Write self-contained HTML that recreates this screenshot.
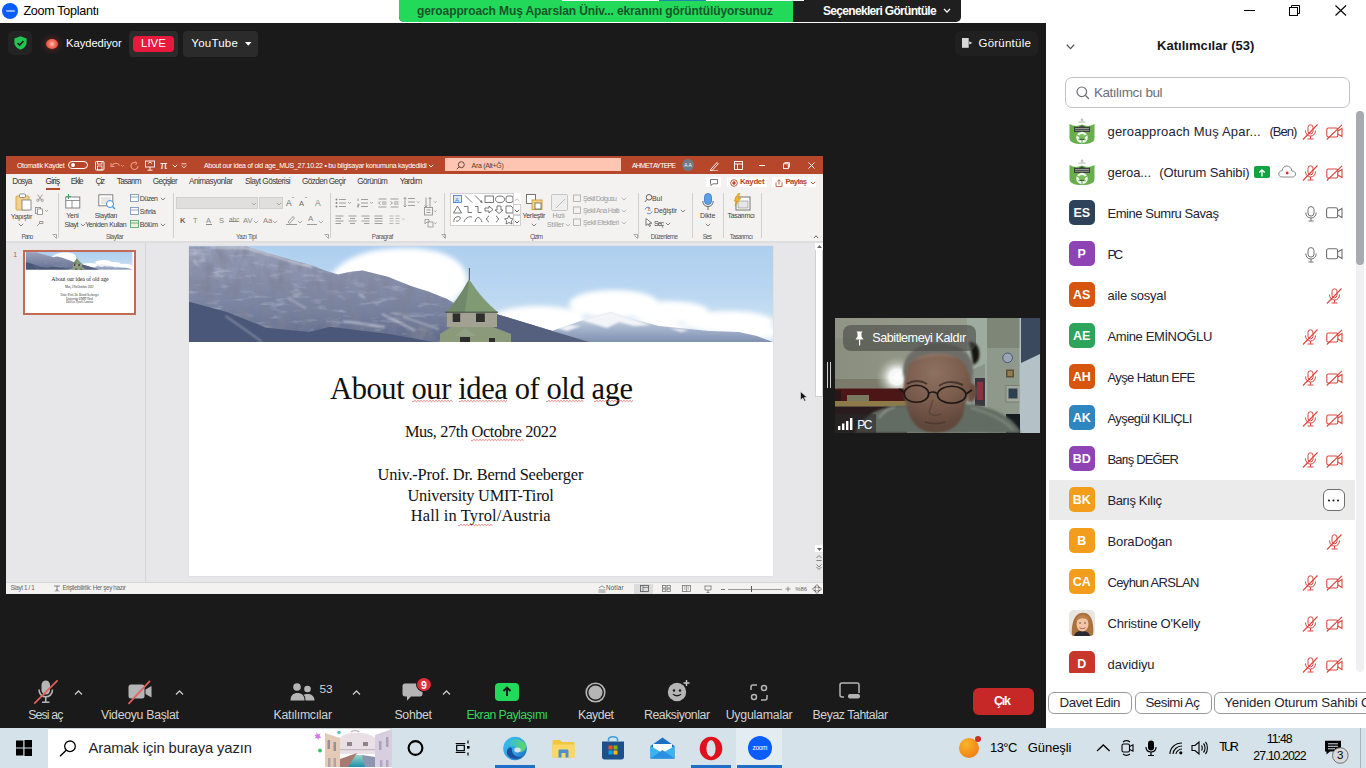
<!DOCTYPE html>
<html><head><meta charset="utf-8">
<style>
*{box-sizing:border-box}
html,body{margin:0;padding:0}
body{width:1366px;height:768px;overflow:hidden;position:relative;font-family:"Liberation Sans",sans-serif;background:#1a1a1a}
.a{position:absolute}
.t{position:absolute;white-space:nowrap;line-height:1}
svg.a{overflow:visible}
</style></head><body>
<div class="a" style="left:0px;top:0px;width:1366px;height:23px;background:#fff;"></div>
<div class="a" style="left:2px;top:3px;width:16px;height:16px;background:#0b5cff;border-radius:50%;"></div>
<div class="a" style="left:5.5px;top:10.3px;width:9px;height:1.4px;background:rgba(255,255,255,.55);border-radius:1px;"></div>
<div class="t" style="left:23.40px;top:5.29px;font-size:12.6px;color:#000;letter-spacing:-0.303px;">Zoom Toplantı</div>
<div class="a" style="left:1244px;top:10px;width:11px;height:1px;background:#000;"></div>
<svg class="a" style="left:1289px;top:5px;" width="12" height="11"><rect x="0.5" y="2.5" width="8" height="8" fill="none" stroke="#000"/><path d="M2.5 2.5V0.5H10.5V8.5H8.5" fill="none" stroke="#000"/></svg>
<svg class="a" style="left:1335px;top:5px;" width="12" height="11"><path d="M0.5 0.5L11 10.5M11 0.5L0.5 10.5" stroke="#000" stroke-width="1.1"/></svg>
<div class="a" style="left:399px;top:0px;width:562px;height:22px;background:#1f1f1f;border-radius:0 0 5px 5px;"></div>
<div class="a" style="left:399px;top:0px;width:394px;height:22px;background:#23d959;border-radius:0 0 0 5px;"></div>
<div class="a" style="left:562px;top:0px;width:241.5px;height:1px;background:#f4f8f6;"></div>
<div class="a" style="left:659.4px;top:0px;width:46.6px;height:1px;background:#1a8aa8;"></div>
<div class="t" style="left:417.00px;top:5.30px;font-size:12px;color:#16562a;font-weight:bold;letter-spacing:-0.102px;">geroapproach Muş Aparslan Üniv... ekranını görüntülüyorsunuz</div>
<div class="t" style="left:823.00px;top:5.30px;font-size:12px;color:#fff;font-weight:bold;letter-spacing:-0.689px;">Seçenekleri Görüntüle</div>
<svg class="a" style="left:943px;top:8px;" width="8" height="6"><path d="M1 1L4 4L7 1" fill="none" stroke="#fff" stroke-width="1.3"/></svg>
<div class="a" style="left:0px;top:23px;width:1046px;height:705px;background:#1a1a1a;"></div>
<div class="a" style="left:8px;top:31px;width:24px;height:24px;background:#232323;border-radius:5px;"></div>
<svg class="a" style="left:14px;top:36px;" width="13" height="14" viewBox="0 0 13 14"><path d="M6.5 0.3L12.6 2.4V6.6C12.6 9.9 10.2 12.4 6.5 13.8C2.8 12.4 0.4 9.9 0.4 6.6V2.4Z" fill="#23c552"/><path d="M3.5 7L5.6 9.1L9.5 5" fill="none" stroke="#1a1a1a" stroke-width="1.6"/></svg>
<div class="a" style="left:40px;top:33px;width:24px;height:22px;background:radial-gradient(closest-side,rgba(190,60,40,.55),rgba(120,40,30,.25) 60%,rgba(26,26,26,0));border-radius:50%;"></div>
<div class="a" style="left:46px;top:39px;width:12px;height:10px;background:radial-gradient(circle at 50% 50%,#ffc8b8 0%,#f4705c 40%,#e34a3a 80%);border-radius:50%;"></div>
<div class="t" style="left:66.10px;top:37.98px;font-size:11.2px;color:#fff;letter-spacing:-0.040px;">Kaydediyor</div>
<div class="a" style="left:129px;top:31px;width:49px;height:26px;background:#2b2b2b;border-radius:4px;"></div>
<div class="a" style="left:133px;top:36px;width:41px;height:15.5px;background:#e8193c;border-radius:4px;"></div>
<div class="t" style="left:141.00px;top:38.02px;font-size:11.5px;color:#fff;letter-spacing:-0.018px;">LIVE</div>
<div class="a" style="left:183px;top:31px;width:75px;height:26px;background:#2b2b2b;border-radius:4px;"></div>
<div class="t" style="left:191.30px;top:38.02px;font-size:11.5px;color:#fff;letter-spacing:0.234px;">YouTube</div>
<svg class="a" style="left:245px;top:42px;" width="7" height="4"><path d="M0 0H6.5L3.25 3.8Z" fill="#fff"/></svg>
<div class="a" style="left:955px;top:31px;width:83px;height:25px;background:#202020;border-radius:6px;"></div>
<svg class="a" style="left:961.6px;top:38px;" width="12" height="10"><rect x="0" y="0" width="6.7" height="9.8" fill="#d8d8d8"/><path d="M7.2 3.3L10.3 4.9L7.2 6.5Z" fill="#d8d8d8"/></svg>
<div class="t" style="left:978.50px;top:37.73px;font-size:11.5px;color:#fff;letter-spacing:0.227px;">Görüntüle</div>
<svg class="a" style="left:33px;top:680px;" width="26" height="25">
      <rect x="8.5" y="0.5" width="8.5" height="14" rx="4.25" fill="#b5b5b5"/>
      <path d="M6 9.5C6 14 9 16.8 12.75 16.8C16.5 16.8 19.5 14 19.5 9.5" fill="none" stroke="#b5b5b5" stroke-width="1.6"/>
      <path d="M12.75 17V21.5M9 22.2H16.5" stroke="#b5b5b5" stroke-width="1.6"/>
      <path d="M1.2 23.6L24.6 0.3" stroke="#e0605a" stroke-width="1.7"/></svg>
<svg class="a" style="left:74px;top:690px;" width="9" height="5"><path d="M1 4.5L4.5 1L8 4.5" fill="none" stroke="#c8c8c8" stroke-width="1.3"/></svg>
<div class="t" style="left:28.20px;top:708.54px;font-size:12.3px;color:#d2d2d2;letter-spacing:-0.841px;">Sesi aç</div>
<svg class="a" style="left:127px;top:680px;" width="26" height="25">
      <rect x="1.5" y="4.5" width="16" height="14" rx="2.5" fill="#b5b5b5"/>
      <path d="M18.5 9.5L24.5 6V17.5L18.5 14Z" fill="#b5b5b5"/>
      <path d="M1.5 23.8L23 0.8" stroke="#e0605a" stroke-width="1.7"/></svg>
<svg class="a" style="left:175px;top:690px;" width="9" height="5"><path d="M1 4.5L4.5 1L8 4.5" fill="none" stroke="#c8c8c8" stroke-width="1.3"/></svg>
<div class="t" style="left:101.00px;top:708.54px;font-size:12.3px;color:#d2d2d2;letter-spacing:-0.297px;">Videoyu Başlat</div>
<svg class="a" style="left:290px;top:683px;" width="26" height="19">
      <circle cx="7" cy="4" r="3.8" fill="#b5b5b5"/>
      <circle cx="17.5" cy="6" r="3.3" fill="#b5b5b5"/>
      <path d="M0.5 17.5C0.5 12 3.5 10 7.5 10C11.5 10 14.5 12 14.5 17.5Z" fill="#b5b5b5"/>
      <path d="M15.5 17.5C15.5 14 14.5 12.5 13.5 11.8C14.5 11.2 16 11 17.5 11C21 11 24.5 12.8 24.5 17.5Z" fill="#b5b5b5"/></svg>
<div class="t" style="left:319.50px;top:684.27px;font-size:11.8px;color:#d2d2d2;letter-spacing:-0.098px;">53</div>
<svg class="a" style="left:352px;top:690px;" width="9" height="5"><path d="M1 4.5L4.5 1L8 4.5" fill="none" stroke="#c8c8c8" stroke-width="1.3"/></svg>
<div class="t" style="left:273.50px;top:708.54px;font-size:12.3px;color:#d2d2d2;letter-spacing:-0.273px;">Katılımcılar</div>
<svg class="a" style="left:402px;top:683px;" width="22" height="19">
      <path d="M3 0.5H18C19.5 0.5 20.5 1.5 20.5 3V11C20.5 12.5 19.5 13.5 18 13.5H9L5 17.8V13.5H3C1.5 13.5 0.5 12.5 0.5 11V3C0.5 1.5 1.5 0.5 3 0.5Z" fill="#b5b5b5"/></svg>
<div class="a" style="left:416px;top:677px;width:16px;height:15px;background:#e02d3c;border-radius:50%;border:1.2px solid #1a1a1a;"></div>
<div class="t" style="left:421.00px;top:679.88px;font-size:10.5px;color:#fff;font-weight:bold;">9</div>
<svg class="a" style="left:442px;top:690px;" width="9" height="5"><path d="M1 4.5L4.5 1L8 4.5" fill="none" stroke="#c8c8c8" stroke-width="1.3"/></svg>
<div class="t" style="left:394.40px;top:708.54px;font-size:12.3px;color:#d2d2d2;letter-spacing:-0.278px;">Sohbet</div>
<div class="a" style="left:495px;top:682.7px;width:24px;height:18.5px;background:#23d959;border-radius:4px;"></div>
<svg class="a" style="left:502px;top:686px;" width="10" height="11"><path d="M5 10V1.5M1.5 5L5 1.5L8.5 5" fill="none" stroke="#111" stroke-width="1.8"/></svg>
<div class="t" style="left:466.40px;top:708.54px;font-size:12.3px;color:#35d55f;letter-spacing:-0.567px;">Ekran Paylaşımı</div>
<svg class="a" style="left:585px;top:682px;" width="21" height="21"><circle cx="10.5" cy="10.5" r="9.3" fill="none" stroke="#b5b5b5" stroke-width="1.6"/><circle cx="10.5" cy="10.5" r="7" fill="#b5b5b5"/></svg>
<div class="t" style="left:578.00px;top:708.54px;font-size:12.3px;color:#d2d2d2;letter-spacing:-0.463px;">Kaydet</div>
<svg class="a" style="left:667px;top:679px;" width="24" height="23">
      <circle cx="10" cy="13" r="9.2" fill="#b5b5b5"/>
      <circle cx="7" cy="11.5" r="1.2" fill="#1a1a1a"/><circle cx="13" cy="11.5" r="1.2" fill="#1a1a1a"/>
      <path d="M6 15C7.5 17.3 12.5 17.3 14 15" fill="none" stroke="#1a1a1a" stroke-width="1.3"/>
      <path d="M19.5 1V7M16.5 4H22.5" stroke="#c8c8c8" stroke-width="1.4"/></svg>
<div class="t" style="left:644.00px;top:708.54px;font-size:12.3px;color:#d2d2d2;letter-spacing:-0.463px;">Reaksiyonlar</div>
<svg class="a" style="left:750px;top:684px;" width="18" height="18">
      <path d="M1 6V3C1 2 2 1 3 1H7M17 11V14C17 15 16 16 15 16H11" fill="none" stroke="#b5b5b5" stroke-width="1.5"/>
      <circle cx="14" cy="4" r="2.5" fill="none" stroke="#b5b5b5" stroke-width="1.5"/>
      <circle cx="4" cy="13" r="2.5" fill="none" stroke="#b5b5b5" stroke-width="1.5"/></svg>
<div class="t" style="left:725.70px;top:708.54px;font-size:12.3px;color:#d2d2d2;letter-spacing:-0.206px;">Uygulamalar</div>
<svg class="a" style="left:839px;top:682px;" width="22" height="18">
      <path d="M5 15H3C2 15 1 14 1 13V3C1 2 2 1 3 1H18C19 1 20 2 20 3V11" fill="none" stroke="#b5b5b5" stroke-width="1.5"/>
      <rect x="9" y="12" width="12" height="4.5" rx="2" fill="#b5b5b5"/></svg>
<div class="t" style="left:812.60px;top:708.54px;font-size:12.3px;color:#d2d2d2;letter-spacing:-0.440px;">Beyaz Tahtalar</div>
<div class="a" style="left:973px;top:688px;width:61px;height:27px;background:#c62828;border-radius:6px;"></div>
<div class="t" style="left:993.90px;top:694.88px;font-size:12.5px;color:#fff;font-weight:bold;letter-spacing:-1.150px;">Çık</div>
<div class="a" style="left:1046px;top:23px;width:320px;height:705px;background:#fff;"></div>
<svg class="a" style="left:1066px;top:43.5px;" width="9" height="6"><path d="M0.8 0.8L4.5 4.6L8.2 0.8" fill="none" stroke="#555" stroke-width="1.3"/></svg>
<div class="t" style="left:1157.00px;top:38.95px;font-size:13px;color:#131619;font-weight:bold;letter-spacing:0.038px;">Katılımcılar (53)</div>
<div class="a" style="left:1065px;top:77.3px;width:285px;height:31.2px;background:#fff;border-radius:7px;border:1px solid #c2c2c8;"></div>
<svg class="a" style="left:1076px;top:86px;" width="14" height="14"><circle cx="5.8" cy="5.8" r="4.8" fill="none" stroke="#6e6e78" stroke-width="1.2"/><path d="M9.3 9.3L13 13" stroke="#6e6e78" stroke-width="1.3"/></svg>
<div class="t" style="left:1094.00px;top:86.03px;font-size:13.5px;color:#6e6e78;letter-spacing:-0.487px;">Katılımcı bul</div>
<svg class="a" style="left:1069px;top:118px;" width="26" height="26">
      <path d="M0.5 6C5 8.5 9 8.5 13 6.5C17 8.5 21 8.5 25.5 6V20C25.5 24 21 26 13 26C5 26 0.5 24 0.5 20Z" fill="#68ae4c"/>
      <path d="M5 8.5C8 9.5 10.5 9 13 7.5C15.5 9 18 9.5 21 8.5V14H5Z" fill="#3d3f3d"/>
      <path d="M6 10.5H20M6 12.3H20" stroke="#cfd8cc" stroke-width=".6"/>
      <circle cx="13" cy="19.5" r="5.8" fill="#eef5ea"/>
      <circle cx="13" cy="19" r="3" fill="#7cc060"/>
      <path d="M13 19V25M9.5 22L13 20L16.5 22M8 17L10.5 18.5M18 17L15.5 18.5" stroke="#6cb050" stroke-width="1.1"/>
      <path d="M9 5C9 2 17 2 17 5Z" fill="#d6d6d6"/><circle cx="13" cy="1.8" r="1.3" fill="#c0c0c0"/></svg>
<div class="t" style="left:1107.50px;top:124.85px;font-size:13px;color:#232333;letter-spacing:0.189px;">geroapproach Muş Apar...</div>
<svg class="a" style="left:1302px;top:123.5px;" width="16" height="16"><rect x="6" y="0.8" width="5" height="9" rx="2.5" fill="none" stroke="#d9463e" stroke-width="1"/>
      <path d="M3.5 6.5C3.5 10 5.5 12 8.5 12C11.5 12 13.5 10 13.5 6.5" fill="none" stroke="#d9463e" stroke-width="1"/>
      <path d="M8.5 12V14.8M5.5 15H11.5" stroke="#d9463e" stroke-width="1"/>
      <path d="M1 15.5L15.5 0.5" stroke="#d9463e" stroke-width="1.1"/></svg>
<svg class="a" style="left:1326px;top:123.5px;" width="17" height="16"><rect x="0.8" y="4" width="11" height="9" rx="1.5" fill="none" stroke="#d9463e" stroke-width="1.1"/>
      <path d="M11.8 7L16 4.5V12.5L11.8 10" fill="none" stroke="#d9463e" stroke-width="1.1"/>
      <path d="M0.8 15.5L16 0.8" stroke="#d9463e" stroke-width="1.1"/></svg>
<div class="t" style="left:1269.50px;top:124.85px;font-size:13px;color:#232333;letter-spacing:-0.971px;">(Ben)</div>
<svg class="a" style="left:1069px;top:159px;" width="26" height="26">
      <path d="M0.5 6C5 8.5 9 8.5 13 6.5C17 8.5 21 8.5 25.5 6V20C25.5 24 21 26 13 26C5 26 0.5 24 0.5 20Z" fill="#68ae4c"/>
      <path d="M5 8.5C8 9.5 10.5 9 13 7.5C15.5 9 18 9.5 21 8.5V14H5Z" fill="#3d3f3d"/>
      <path d="M6 10.5H20M6 12.3H20" stroke="#cfd8cc" stroke-width=".6"/>
      <circle cx="13" cy="19.5" r="5.8" fill="#eef5ea"/>
      <circle cx="13" cy="19" r="3" fill="#7cc060"/>
      <path d="M13 19V25M9.5 22L13 20L16.5 22M8 17L10.5 18.5M18 17L15.5 18.5" stroke="#6cb050" stroke-width="1.1"/>
      <path d="M9 5C9 2 17 2 17 5Z" fill="#d6d6d6"/><circle cx="13" cy="1.8" r="1.3" fill="#c0c0c0"/></svg>
<div class="t" style="left:1107.50px;top:165.85px;font-size:13px;color:#232333;letter-spacing:-0.081px;">geroa...</div>
<div class="a" style="left:1254px;top:165.9px;width:16px;height:11.8px;background:#12a440;border-radius:2px;"></div>
<svg class="a" style="left:1257px;top:167.5px;" width="10" height="9"><path d="M5 8.5V2M2.3 4.5L5 1.8L7.7 4.5" fill="none" stroke="#fff" stroke-width="1.3"/></svg>
<svg class="a" style="left:1277.5px;top:165px;" width="18" height="13"><path d="M4 12H14.5C16.5 12 17.5 10.5 17.5 9C17.5 7 16 6 14 6C13.5 3 11.5 1 9 1C6 1 4.5 3 4.3 5.5C2 5.7 0.8 7.5 0.8 9C0.8 10.8 2 12 4 12Z" fill="none" stroke="#8a8a8a" stroke-width="1"/><circle cx="9.2" cy="8" r="1.4" fill="#e03030"/></svg>
<svg class="a" style="left:1302px;top:164.5px;" width="16" height="16"><rect x="6" y="0.8" width="5" height="9" rx="2.5" fill="none" stroke="#d9463e" stroke-width="1"/>
      <path d="M3.5 6.5C3.5 10 5.5 12 8.5 12C11.5 12 13.5 10 13.5 6.5" fill="none" stroke="#d9463e" stroke-width="1"/>
      <path d="M8.5 12V14.8M5.5 15H11.5" stroke="#d9463e" stroke-width="1"/>
      <path d="M1 15.5L15.5 0.5" stroke="#d9463e" stroke-width="1.1"/></svg>
<svg class="a" style="left:1326px;top:164.5px;" width="17" height="16"><rect x="0.8" y="4" width="11" height="9" rx="1.5" fill="none" stroke="#d9463e" stroke-width="1.1"/>
      <path d="M11.8 7L16 4.5V12.5L11.8 10" fill="none" stroke="#d9463e" stroke-width="1.1"/>
      <path d="M0.8 15.5L16 0.8" stroke="#d9463e" stroke-width="1.1"/></svg>
<div class="t" style="left:1159.30px;top:165.85px;font-size:13px;color:#232333;letter-spacing:-0.106px;">(Oturum Sahibi)</div>
<div class="a" style="left:1069px;top:199.70000000000002px;width:25.5px;height:25.5px;background:#2e425a;border-radius:5px;"></div>
<div class="t" style="left:1073.41px;top:206.68px;font-size:12.5px;color:#fff;font-weight:bold;">ES</div>
<div class="t" style="left:1107.50px;top:206.85px;font-size:13px;color:#232333;letter-spacing:-0.443px;">Emine Sumru Savaş</div>
<svg class="a" style="left:1304.5px;top:205.70000000000002px;" width="12" height="16"><rect x="3" y="0.6" width="6" height="9.5" rx="3" fill="none" stroke="#707070" stroke-width="1"/>
      <path d="M0.8 6.5C0.8 10 3 12 6 12C9 12 11.2 10 11.2 6.5" fill="none" stroke="#707070" stroke-width="1"/>
      <path d="M6 12V14.8M3.5 15H8.5" stroke="#707070" stroke-width="1"/></svg>
<svg class="a" style="left:1326px;top:207.4px;" width="17" height="12"><rect x="0.6" y="0.8" width="11" height="10" rx="1.8" fill="none" stroke="#707070" stroke-width="1.1"/>
      <path d="M11.6 4L16 1.5V10.5L11.6 8" fill="none" stroke="#707070" stroke-width="1.1"/></svg>
<div class="a" style="left:1069px;top:240.7px;width:25.5px;height:25.5px;background:#8e44b5;border-radius:5px;"></div>
<div class="t" style="left:1077.59px;top:247.68px;font-size:12.5px;color:#fff;font-weight:bold;">P</div>
<div class="t" style="left:1107.50px;top:247.85px;font-size:13px;color:#232333;letter-spacing:-2.470px;">PC</div>
<svg class="a" style="left:1304.5px;top:246.7px;" width="12" height="16"><rect x="3" y="0.6" width="6" height="9.5" rx="3" fill="none" stroke="#707070" stroke-width="1"/>
      <path d="M0.8 6.5C0.8 10 3 12 6 12C9 12 11.2 10 11.2 6.5" fill="none" stroke="#707070" stroke-width="1"/>
      <path d="M6 12V14.8M3.5 15H8.5" stroke="#707070" stroke-width="1"/></svg>
<svg class="a" style="left:1326px;top:248.39999999999998px;" width="17" height="12"><rect x="0.6" y="0.8" width="11" height="10" rx="1.8" fill="none" stroke="#707070" stroke-width="1.1"/>
      <path d="M11.6 4L16 1.5V10.5L11.6 8" fill="none" stroke="#707070" stroke-width="1.1"/></svg>
<div class="a" style="left:1069px;top:281.7px;width:25.5px;height:25.5px;background:#d6550f;border-radius:5px;"></div>
<div class="t" style="left:1073.06px;top:288.68px;font-size:12.5px;color:#fff;font-weight:bold;">AS</div>
<div class="t" style="left:1107.50px;top:288.85px;font-size:13px;color:#232333;letter-spacing:-0.191px;">aile sosyal</div>
<svg class="a" style="left:1326px;top:287.5px;" width="16" height="16"><rect x="6" y="0.8" width="5" height="9" rx="2.5" fill="none" stroke="#d9463e" stroke-width="1"/>
      <path d="M3.5 6.5C3.5 10 5.5 12 8.5 12C11.5 12 13.5 10 13.5 6.5" fill="none" stroke="#d9463e" stroke-width="1"/>
      <path d="M8.5 12V14.8M5.5 15H11.5" stroke="#d9463e" stroke-width="1"/>
      <path d="M1 15.5L15.5 0.5" stroke="#d9463e" stroke-width="1.1"/></svg>
<div class="a" style="left:1069px;top:322.7px;width:25.5px;height:25.5px;background:#2da45c;border-radius:5px;"></div>
<div class="t" style="left:1073.06px;top:329.68px;font-size:12.5px;color:#fff;font-weight:bold;">AE</div>
<div class="t" style="left:1107.50px;top:329.85px;font-size:13px;color:#232333;letter-spacing:-0.383px;">Amine EMİNOĞLU</div>
<svg class="a" style="left:1302px;top:328.5px;" width="16" height="16"><rect x="6" y="0.8" width="5" height="9" rx="2.5" fill="none" stroke="#d9463e" stroke-width="1"/>
      <path d="M3.5 6.5C3.5 10 5.5 12 8.5 12C11.5 12 13.5 10 13.5 6.5" fill="none" stroke="#d9463e" stroke-width="1"/>
      <path d="M8.5 12V14.8M5.5 15H11.5" stroke="#d9463e" stroke-width="1"/>
      <path d="M1 15.5L15.5 0.5" stroke="#d9463e" stroke-width="1.1"/></svg>
<svg class="a" style="left:1326px;top:328.5px;" width="17" height="16"><rect x="0.8" y="4" width="11" height="9" rx="1.5" fill="none" stroke="#d9463e" stroke-width="1.1"/>
      <path d="M11.8 7L16 4.5V12.5L11.8 10" fill="none" stroke="#d9463e" stroke-width="1.1"/>
      <path d="M0.8 15.5L16 0.8" stroke="#d9463e" stroke-width="1.1"/></svg>
<div class="a" style="left:1069px;top:363.7px;width:25.5px;height:25.5px;background:#d6550f;border-radius:5px;"></div>
<div class="t" style="left:1072.72px;top:370.68px;font-size:12.5px;color:#fff;font-weight:bold;">AH</div>
<div class="t" style="left:1107.50px;top:370.85px;font-size:13px;color:#232333;letter-spacing:-0.621px;">Ayşe Hatun EFE</div>
<svg class="a" style="left:1302px;top:369.5px;" width="16" height="16"><rect x="6" y="0.8" width="5" height="9" rx="2.5" fill="none" stroke="#d9463e" stroke-width="1"/>
      <path d="M3.5 6.5C3.5 10 5.5 12 8.5 12C11.5 12 13.5 10 13.5 6.5" fill="none" stroke="#d9463e" stroke-width="1"/>
      <path d="M8.5 12V14.8M5.5 15H11.5" stroke="#d9463e" stroke-width="1"/>
      <path d="M1 15.5L15.5 0.5" stroke="#d9463e" stroke-width="1.1"/></svg>
<svg class="a" style="left:1326px;top:369.5px;" width="17" height="16"><rect x="0.8" y="4" width="11" height="9" rx="1.5" fill="none" stroke="#d9463e" stroke-width="1.1"/>
      <path d="M11.8 7L16 4.5V12.5L11.8 10" fill="none" stroke="#d9463e" stroke-width="1.1"/>
      <path d="M0.8 15.5L16 0.8" stroke="#d9463e" stroke-width="1.1"/></svg>
<div class="a" style="left:1069px;top:404.7px;width:25.5px;height:25.5px;background:#2e86c1;border-radius:5px;"></div>
<div class="t" style="left:1072.72px;top:411.68px;font-size:12.5px;color:#fff;font-weight:bold;">AK</div>
<div class="t" style="left:1107.50px;top:411.85px;font-size:13px;color:#232333;letter-spacing:-0.587px;">Ayşegül KILIÇLI</div>
<svg class="a" style="left:1302px;top:410.5px;" width="16" height="16"><rect x="6" y="0.8" width="5" height="9" rx="2.5" fill="none" stroke="#d9463e" stroke-width="1"/>
      <path d="M3.5 6.5C3.5 10 5.5 12 8.5 12C11.5 12 13.5 10 13.5 6.5" fill="none" stroke="#d9463e" stroke-width="1"/>
      <path d="M8.5 12V14.8M5.5 15H11.5" stroke="#d9463e" stroke-width="1"/>
      <path d="M1 15.5L15.5 0.5" stroke="#d9463e" stroke-width="1.1"/></svg>
<svg class="a" style="left:1326px;top:410.5px;" width="17" height="16"><rect x="0.8" y="4" width="11" height="9" rx="1.5" fill="none" stroke="#d9463e" stroke-width="1.1"/>
      <path d="M11.8 7L16 4.5V12.5L11.8 10" fill="none" stroke="#d9463e" stroke-width="1.1"/>
      <path d="M0.8 15.5L16 0.8" stroke="#d9463e" stroke-width="1.1"/></svg>
<div class="a" style="left:1069px;top:445.7px;width:25.5px;height:25.5px;background:#8e44b5;border-radius:5px;"></div>
<div class="t" style="left:1072.72px;top:452.68px;font-size:12.5px;color:#fff;font-weight:bold;">BD</div>
<div class="t" style="left:1107.50px;top:452.85px;font-size:13px;color:#232333;letter-spacing:-0.881px;">Barış DEĞER</div>
<svg class="a" style="left:1302px;top:451.5px;" width="16" height="16"><rect x="6" y="0.8" width="5" height="9" rx="2.5" fill="none" stroke="#d9463e" stroke-width="1"/>
      <path d="M3.5 6.5C3.5 10 5.5 12 8.5 12C11.5 12 13.5 10 13.5 6.5" fill="none" stroke="#d9463e" stroke-width="1"/>
      <path d="M8.5 12V14.8M5.5 15H11.5" stroke="#d9463e" stroke-width="1"/>
      <path d="M1 15.5L15.5 0.5" stroke="#d9463e" stroke-width="1.1"/></svg>
<svg class="a" style="left:1326px;top:451.5px;" width="17" height="16"><rect x="0.8" y="4" width="11" height="9" rx="1.5" fill="none" stroke="#d9463e" stroke-width="1.1"/>
      <path d="M11.8 7L16 4.5V12.5L11.8 10" fill="none" stroke="#d9463e" stroke-width="1.1"/>
      <path d="M0.8 15.5L16 0.8" stroke="#d9463e" stroke-width="1.1"/></svg>
<div class="a" style="left:1049px;top:479.7px;width:306px;height:40.6px;background:#ebebeb;"></div>
<div class="a" style="left:1069px;top:486.7px;width:25.5px;height:25.5px;background:#f29d1c;border-radius:5px;"></div>
<div class="t" style="left:1072.72px;top:493.68px;font-size:12.5px;color:#fff;font-weight:bold;">BK</div>
<div class="t" style="left:1107.50px;top:493.85px;font-size:13px;color:#232333;letter-spacing:-0.462px;">Barış Kılıç</div>
<div class="a" style="left:1322.5px;top:489.4px;width:22px;height:22px;background:#fff;border-radius:6px;border:1px solid #6e6e6e;"></div>
<svg class="a" style="left:1327px;top:499px;" width="13" height="3"><circle cx="2" cy="1.5" r="1.1" fill="#222"/><circle cx="6.5" cy="1.5" r="1.1" fill="#222"/><circle cx="11" cy="1.5" r="1.1" fill="#222"/></svg>
<div class="a" style="left:1069px;top:527.6999999999999px;width:25.5px;height:25.5px;background:#f29d1c;border-radius:5px;"></div>
<div class="t" style="left:1077.25px;top:534.67px;font-size:12.5px;color:#fff;font-weight:bold;">B</div>
<div class="t" style="left:1107.50px;top:534.85px;font-size:13px;color:#232333;letter-spacing:-0.123px;">BoraDoğan</div>
<svg class="a" style="left:1326px;top:533.5px;" width="16" height="16"><rect x="6" y="0.8" width="5" height="9" rx="2.5" fill="none" stroke="#d9463e" stroke-width="1"/>
      <path d="M3.5 6.5C3.5 10 5.5 12 8.5 12C11.5 12 13.5 10 13.5 6.5" fill="none" stroke="#d9463e" stroke-width="1"/>
      <path d="M8.5 12V14.8M5.5 15H11.5" stroke="#d9463e" stroke-width="1"/>
      <path d="M1 15.5L15.5 0.5" stroke="#d9463e" stroke-width="1.1"/></svg>
<div class="a" style="left:1069px;top:568.6999999999999px;width:25.5px;height:25.5px;background:#f29d1c;border-radius:5px;"></div>
<div class="t" style="left:1072.72px;top:575.67px;font-size:12.5px;color:#fff;font-weight:bold;">CA</div>
<div class="t" style="left:1107.50px;top:575.85px;font-size:13px;color:#232333;letter-spacing:-0.659px;">Ceyhun ARSLAN</div>
<svg class="a" style="left:1302px;top:574.5px;" width="16" height="16"><rect x="6" y="0.8" width="5" height="9" rx="2.5" fill="none" stroke="#d9463e" stroke-width="1"/>
      <path d="M3.5 6.5C3.5 10 5.5 12 8.5 12C11.5 12 13.5 10 13.5 6.5" fill="none" stroke="#d9463e" stroke-width="1"/>
      <path d="M8.5 12V14.8M5.5 15H11.5" stroke="#d9463e" stroke-width="1"/>
      <path d="M1 15.5L15.5 0.5" stroke="#d9463e" stroke-width="1.1"/></svg>
<svg class="a" style="left:1326px;top:574.5px;" width="17" height="16"><rect x="0.8" y="4" width="11" height="9" rx="1.5" fill="none" stroke="#d9463e" stroke-width="1.1"/>
      <path d="M11.8 7L16 4.5V12.5L11.8 10" fill="none" stroke="#d9463e" stroke-width="1.1"/>
      <path d="M0.8 15.5L16 0.8" stroke="#d9463e" stroke-width="1.1"/></svg>
<svg class="a" style="left:1069px;top:609.6999999999999px;" width="26" height="26">
              <defs><clipPath id="cph"><rect width="26" height="26" rx="5"/></clipPath></defs>
              <g clip-path="url(#cph)">
              <rect width="26" height="26" fill="#e9e6e2"/>
              <path d="M3 26C2 18 4 8 8 5C11 2 17 2 20 5C24 9 25 18 24 26Z" fill="#a8733e"/>
              <path d="M5 26C6 22 9 21 13 21C17 21 20 22 21 26Z" fill="#2a2a35"/>
              <ellipse cx="13.5" cy="14" rx="6" ry="7.5" fill="#f0c4a4"/>
              <path d="M7 11C8 6 11 5 14 5C17 5 20 7 20.5 11C18 9 15 8 12 8.5C10 9 8 10 7 11Z" fill="#b98048"/>
              <path d="M10.5 17.5C12 19 15 19 16.5 17.5" fill="none" stroke="#c05050" stroke-width=".9"/>
              <circle cx="11" cy="13" r=".7" fill="#3a2a20"/><circle cx="16" cy="13" r=".7" fill="#3a2a20"/>
              </g></svg>
<div class="t" style="left:1107.50px;top:616.85px;font-size:13px;color:#232333;letter-spacing:-0.180px;">Christine O&#x27;Kelly</div>
<svg class="a" style="left:1302px;top:615.5px;" width="16" height="16"><rect x="6" y="0.8" width="5" height="9" rx="2.5" fill="none" stroke="#d9463e" stroke-width="1"/>
      <path d="M3.5 6.5C3.5 10 5.5 12 8.5 12C11.5 12 13.5 10 13.5 6.5" fill="none" stroke="#d9463e" stroke-width="1"/>
      <path d="M8.5 12V14.8M5.5 15H11.5" stroke="#d9463e" stroke-width="1"/>
      <path d="M1 15.5L15.5 0.5" stroke="#d9463e" stroke-width="1.1"/></svg>
<svg class="a" style="left:1326px;top:615.5px;" width="17" height="16"><rect x="0.8" y="4" width="11" height="9" rx="1.5" fill="none" stroke="#d9463e" stroke-width="1.1"/>
      <path d="M11.8 7L16 4.5V12.5L11.8 10" fill="none" stroke="#d9463e" stroke-width="1.1"/>
      <path d="M0.8 15.5L16 0.8" stroke="#d9463e" stroke-width="1.1"/></svg>
<div class="a" style="left:1069px;top:650.6999999999999px;width:25.5px;height:25.5px;background:#c8372b;border-radius:5px;"></div>
<div class="t" style="left:1077.25px;top:657.67px;font-size:12.5px;color:#fff;font-weight:bold;">D</div>
<div class="t" style="left:1107.50px;top:657.85px;font-size:13px;color:#232333;letter-spacing:-0.087px;">davidiyu</div>
<svg class="a" style="left:1302px;top:656.5px;" width="16" height="16"><rect x="6" y="0.8" width="5" height="9" rx="2.5" fill="none" stroke="#d9463e" stroke-width="1"/>
      <path d="M3.5 6.5C3.5 10 5.5 12 8.5 12C11.5 12 13.5 10 13.5 6.5" fill="none" stroke="#d9463e" stroke-width="1"/>
      <path d="M8.5 12V14.8M5.5 15H11.5" stroke="#d9463e" stroke-width="1"/>
      <path d="M1 15.5L15.5 0.5" stroke="#d9463e" stroke-width="1.1"/></svg>
<svg class="a" style="left:1326px;top:656.5px;" width="17" height="16"><rect x="0.8" y="4" width="11" height="9" rx="1.5" fill="none" stroke="#d9463e" stroke-width="1.1"/>
      <path d="M11.8 7L16 4.5V12.5L11.8 10" fill="none" stroke="#d9463e" stroke-width="1.1"/>
      <path d="M0.8 15.5L16 0.8" stroke="#d9463e" stroke-width="1.1"/></svg>
<div class="a" style="left:1356px;top:111.4px;width:8px;height:561px;background:#efeff4;border-radius:4px;"></div>
<div class="a" style="left:1356px;top:111.4px;width:8px;height:153.4px;background:#a9a9b1;border-radius:4px;"></div>
<div class="a" style="left:1046px;top:673.3px;width:320px;height:54.7px;background:#fff;"></div>
<div class="a" style="left:1048.4px;top:691.5px;width:84px;height:22.2px;background:#fff;border-radius:6px;border:1px solid #9a9a9a;"></div>
<div class="t" style="left:1059.60px;top:696.20px;font-size:13.3px;color:#232333;letter-spacing:-0.471px;">Davet Edin</div>
<div class="a" style="left:1134.5px;top:691.5px;width:77px;height:22.2px;background:#fff;border-radius:6px;border:1px solid #9a9a9a;"></div>
<div class="t" style="left:1145.50px;top:696.20px;font-size:13.3px;color:#232333;letter-spacing:-0.498px;">Sesimi Aç</div>
<div class="a" style="left:1213.5px;top:691.5px;width:170px;height:22.2px;background:#fff;border-radius:6px;border:1px solid #9a9a9a;"></div>
<div class="t" style="left:1224.20px;top:696.20px;font-size:13.3px;color:#232333;letter-spacing:-0.143px;">Yeniden Oturum Sahibi Ol</div>
<div class="a" style="left:0px;top:728px;width:1366px;height:40px;background:#d5e2e9;"></div>
<svg class="a" style="left:16px;top:740px;" width="16" height="16"><rect x="0" y="0.5" width="7.3" height="7" fill="#000"/><rect x="8.5" y="0" width="7.5" height="7.5" fill="#000"/><rect x="0" y="8.5" width="7.3" height="7" fill="#000"/><rect x="8.5" y="8.5" width="7.5" height="7.5" fill="#000"/></svg>
<div class="a" style="left:48px;top:728px;width:344px;height:40px;background:#fff;border-top:1px solid #c9d1d6;"></div>
<svg class="a" style="left:59px;top:740px;" width="18" height="17"><circle cx="11" cy="6.3" r="5.3" fill="none" stroke="#000" stroke-width="1.3"/><path d="M7.2 10.2L1 16.3" stroke="#000" stroke-width="1.4"/></svg>
<div class="t" style="left:88.60px;top:741.42px;font-size:14.8px;color:#1f1f1f;letter-spacing:-0.119px;">Aramak için buraya yazın</div>
<svg class="a" style="left:313px;top:729px;" width="79" height="38">
      <defs><linearGradient id="can" x1="0" y1="0" x2="0" y2="1"><stop offset="0" stop-color="#9ad7c8"/><stop offset="1" stop-color="#1f8fa8"/></linearGradient></defs>
      <path d="M12 4L27 9V38H12Z" fill="#e3cbb8"/>
      <rect x="14.5" y="11" width="2.5" height="9" fill="#9c8f8f"/><rect x="20.5" y="13" width="2.5" height="9" fill="#9c8f8f"/>
      <rect x="15" y="29" width="2.5" height="9" fill="#b5a3a3"/><rect x="20.5" y="29" width="2.5" height="9" fill="#b5a3a3"/>
      <path d="M27 9C32 2 55 2 62 9V25H27Z" fill="#e8e0e4"/>
      <path d="M38 3C40 1 44 1 46 3" fill="none" stroke="#c8b8c8" stroke-width="1.5"/>
      <rect x="34" y="13" width="5" height="4" fill="#8f8588"/><rect x="50" y="13" width="5" height="4" fill="#8f8588"/>
      <rect x="27" y="20" width="35" height="1.2" fill="#c5b8c2"/>
      <path d="M27 38L37 26H49L60 38Z" fill="url(#can)"/>
      <path d="M27 38V30L44 24L35 38Z" fill="#a67a70"/>
      <path d="M49 26L62 28V38L52 38Z" fill="#8c96b0"/>
      <path d="M62 6L79 0V38H62Z" fill="#d7cfe0"/>
      <rect x="66" y="12" width="2.5" height="9" fill="#aaa2b8"/><rect x="73" y="8" width="2.5" height="10" fill="#aaa2b8"/>
      <rect x="67" y="31" width="2.5" height="7" fill="#b0a8c0"/><rect x="73" y="31" width="2.5" height="7" fill="#b0a8c0"/>
      <path d="M3.5 3L5 5.5L7.5 4.5L6.5 7L8.5 8.5L6 9L5.5 11L4 9L1.5 9.5L3 7.5L1 5.5L3.5 6Z" fill="#d678ea"/>
      <circle cx="26" cy="3.5" r="1.8" fill="#56c3c8"/>
      <circle cx="7" cy="21.5" r="1.9" fill="#3fbd6a"/></svg>
<svg class="a" style="left:407px;top:740px;" width="18" height="16"><circle cx="8.5" cy="8" r="6.9" fill="none" stroke="#000" stroke-width="2.1"/></svg>
<svg class="a" style="left:455px;top:740px;" width="18" height="16"><path d="M0.7 3.5H10.3M0.7 12.5H10.3" stroke="#000" stroke-width="1.2"/><rect x="1.7" y="5.3" width="7.6" height="5.4" fill="none" stroke="#000" stroke-width="1.2"/><path d="M13 0.5V3.5M13 12.5V15.5" stroke="#000" stroke-width="1.2"/><rect x="12" y="6" width="2.6" height="2.6" fill="#000"/></svg>
<svg class="a" style="left:502px;top:736px;" width="26" height="25">
      <defs><linearGradient id="eg1" x1="0" y1="0" x2="1" y2="1"><stop offset="0" stop-color="#36c5f0"/><stop offset=".6" stop-color="#2f9de0"/><stop offset="1" stop-color="#1e5fb3"/></linearGradient>
      <linearGradient id="eg2" x1="0" y1="0" x2="1" y2="0"><stop offset="0" stop-color="#37b6e8"/><stop offset="1" stop-color="#5ad86a"/></linearGradient></defs>
      <circle cx="13" cy="12.5" r="11.8" fill="url(#eg1)"/>
      <path d="M5 8C8 2 20 1 24 9C24.5 13 22 16 18 16C15 16 13.5 14.5 14 12.5C15 10 11 9.5 9 10.5Z" fill="url(#eg2)"/>
      <path d="M10 14C10 19 15 22 20 20.5C17 23.5 9 24 5.5 19C4 16.5 5 13 7.5 11.5C9 11 10 12 10 14Z" fill="#1b4fa0"/>
      <ellipse cx="15.5" cy="14" rx="3.3" ry="2.4" fill="#d5e2e9"/></svg>
<div class="a" style="left:495px;top:765px;width:40px;height:3px;background:#1f6fc8;"></div>
<svg class="a" style="left:552px;top:739px;" width="24" height="19">
      <path d="M0.5 2.5C0.5 1.5 1 1 2 1H8L10 3H21C22 3 22.5 3.5 22.5 4.5V17C22.5 18 22 18.5 21 18.5H2C1 18.5 0.5 18 0.5 17Z" fill="#f3c640"/>
      <path d="M0.5 5.5H22.5V17C22.5 18 22 18.5 21 18.5H2C1 18.5 0.5 18 0.5 17Z" fill="#fad868"/>
      <path d="M6.5 18.5V12C6.5 11 7 10.5 8 10.5H15C16 10.5 16.5 11 16.5 12V18.5H13.5V14H9.5V18.5Z" fill="#4a8fd0"/></svg>
<svg class="a" style="left:601px;top:736px;" width="24" height="24">
      <path d="M7.5 5V3.5C7.5 1.5 9.5 0.8 12 0.8C14.5 0.8 16.5 1.5 16.5 3.5V5" fill="none" stroke="#3aa0e0" stroke-width="1.6"/>
      <path d="M1 5.5H23V21C23 22.5 22 23.5 20.5 23.5H3.5C2 23.5 1 22.5 1 21Z" fill="#1d4f8c"/>
      <rect x="7.5" y="9.5" width="4" height="4" fill="#f25022"/><rect x="12.5" y="9.5" width="4" height="4" fill="#7fba00"/>
      <rect x="7.5" y="14.5" width="4" height="4" fill="#00a4ef"/><rect x="12.5" y="14.5" width="4" height="4" fill="#ffb900"/></svg>
<svg class="a" style="left:650px;top:737px;" width="25" height="22">
      <path d="M0.5 9L12.5 0.5L24.5 9V21.5H0.5Z" fill="#1d6fc4"/>
      <path d="M3 7H22V15L12.5 19L3 15Z" fill="#fff"/>
      <path d="M0.5 9L12.5 16L24.5 9V21.5H0.5Z" fill="#3ab3f0"/>
      <path d="M0.5 21.5L12.5 13L24.5 21.5Z" fill="#2a8fe0"/></svg>
<svg class="a" style="left:699px;top:736px;" width="24" height="25">
      <ellipse cx="12" cy="12.5" rx="11.3" ry="11.8" fill="#e0101d"/>
      <ellipse cx="12" cy="12.5" rx="4.6" ry="8.3" fill="#d5e2e9"/></svg>
<div class="a" style="left:691px;top:765px;width:40px;height:3px;background:#1f6fc8;"></div>
<div class="a" style="left:736px;top:728px;width:46px;height:40px;background:rgba(255,255,255,.35);"></div>
<div class="a" style="left:748px;top:736px;width:24px;height:24px;background:#0b5cff;border-radius:50%;"></div>
<div class="t" style="left:752.50px;top:745.27px;font-size:6.5px;color:#fff;letter-spacing:-0.298px;">zoom</div>
<div class="a" style="left:737px;top:765px;width:45px;height:3px;background:#1f6fc8;"></div>
<div class="a" style="left:958.7px;top:737.7px;width:20.5px;height:20.5px;background:radial-gradient(circle at 35% 30%,#f7b72a,#f27c12 80%);border-radius:50%;"></div>
<div class="a" style="left:975px;top:735.7px;width:6.3px;height:6.3px;background:#d12a2a;border-radius:50%;"></div>
<div class="t" style="left:990.00px;top:741.35px;font-size:13px;color:#000;letter-spacing:-0.552px;">13°C</div>
<div class="t" style="left:1027.80px;top:741.35px;font-size:13px;color:#000;letter-spacing:-0.078px;">Güneşli</div>
<svg class="a" style="left:1096px;top:744px;" width="15" height="8"><path d="M1 7L7.3 1L13.6 7" fill="none" stroke="#000" stroke-width="1.3"/></svg>
<svg class="a" style="left:1121px;top:740px;" width="13" height="16"><rect x="1" y="4" width="7.5" height="8" rx="1.5" fill="none" stroke="#000" stroke-width="1.1"/><path d="M8.5 6.5L12 4.8V11.2L8.5 9.5" fill="none" stroke="#000" stroke-width="1.1"/><path d="M2 2C4 0.5 7 0.5 9 2M2 14C4 15.5 7 15.5 9 14" fill="none" stroke="#000" stroke-width="1.1"/></svg>
<svg class="a" style="left:1145px;top:740px;" width="12" height="16"><rect x="3" y="0.5" width="6" height="10" rx="3" fill="#000"/><path d="M1 7C1 10.5 3 12 6 12C9 12 11 10.5 11 7" fill="none" stroke="#000" stroke-width="1.2"/><path d="M6 12V15.5M3 15.5H9" stroke="#000" stroke-width="1.2"/></svg>
<svg class="a" style="left:1169px;top:742px;" width="15" height="13"><path d="M1 12C1 6 6 1 13 1M4 12C4 8 8 4 13 4M7 12C7 9.5 10 7 13 7" fill="none" stroke="#000" stroke-width="1.1"/><circle cx="11.8" cy="10.8" r="1.6" fill="#000"/></svg>
<svg class="a" style="left:1191px;top:741px;" width="17" height="14"><path d="M1 4.5H4L8 1V13L4 9.5H1Z" fill="none" stroke="#000" stroke-width="1.1"/><path d="M10.5 4.5C11.5 5.5 11.5 8.5 10.5 9.5M12.5 2.5C14.5 4.5 14.5 9.5 12.5 11.5M14.5 1C17 3.5 17 10.5 14.5 13" fill="none" stroke="#000" stroke-width="1.1"/></svg>
<div class="t" style="left:1219.30px;top:741.34px;font-size:12.3px;color:#000;letter-spacing:-2.838px;">TUR</div>
<div class="t" style="left:1266.80px;top:732.75px;font-size:12.3px;color:#000;letter-spacing:-0.997px;">11:48</div>
<div class="t" style="left:1253.30px;top:750.25px;font-size:12.3px;color:#000;letter-spacing:-0.918px;">27.10.2022</div>
<svg class="a" style="left:1324px;top:740px;" width="26" height="25"><path d="M1 0.8H17V11.5H6L2.5 14.5V11.5H1Z" fill="#000"/><path d="M4 3.8H14M4 6.3H14M4 8.8H11" stroke="#d5e2e9" stroke-width="1"/><circle cx="16.3" cy="15.5" r="7.8" fill="#d9d9d9" stroke="#666" stroke-width=".9"/></svg>
<div class="t" style="left:1337.00px;top:750.23px;font-size:11.5px;color:#000;">3</div>
<div class="a" style="left:1360px;top:728px;width:1px;height:40px;background:#a9b5bc;"></div>
<div class="a" style="left:6px;top:156px;width:817px;height:438px;background:#e7e7e9;"></div>
<div class="a" style="left:6px;top:156px;width:817px;height:17.5px;background:#b7472a;"></div>
<div class="t" style="left:16.90px;top:161.55px;font-size:7px;color:#fff;letter-spacing:-0.288px;">Otomatik Kaydet</div>
<div class="a" style="left:68.3px;top:161px;width:20px;height:8.2px;border-radius:4.1px;border:1px solid #fff;"></div>
<div class="a" style="left:70.6px;top:163.1px;width:4px;height:4px;background:#fff;border-radius:50%;"></div>
<svg class="a" style="left:95px;top:160.5px;" width="10" height="10"><rect x="0.5" y="0.5" width="8.5" height="8.5" rx="1" fill="none" stroke="#fff" stroke-width=".9"/><rect x="2.5" y="5" width="4.5" height="4" fill="none" stroke="#fff" stroke-width=".8"/><rect x="2.5" y="0.5" width="4.5" height="2.5" fill="none" stroke="#fff" stroke-width=".8"/></svg>
<svg class="a" style="left:110px;top:160.5px;" width="16" height="10"><path d="M2 4.5C4 1.5 8 1.5 9.5 4.5" fill="none" stroke="#e89a86" stroke-width="1.1"/><path d="M1 2V5.5H4.5" fill="none" stroke="#e89a86" stroke-width="1.1"/><path d="M11 4L12.5 5.5L14 4" fill="none" stroke="#e89a86" stroke-width=".8"/></svg>
<svg class="a" style="left:129.5px;top:160.5px;" width="10" height="10"><path d="M8 5A3.5 3.5 0 1 1 6 1.8" fill="none" stroke="#e89a86" stroke-width="1.1"/><path d="M5 0.5L7 2L5.5 4" fill="none" stroke="#e89a86" stroke-width="1"/></svg>
<svg class="a" style="left:144.5px;top:160px;" width="10" height="11"><rect x="0.5" y="1" width="9" height="6" fill="none" stroke="#fff" stroke-width=".9"/><path d="M5 7V10M2.5 10.2H7.5M3 3.5L5 2L7 3.5" fill="none" stroke="#fff" stroke-width=".9"/></svg>
<div class="t" style="left:160.00px;top:159.65px;font-size:11px;color:#fff;">π</div>
<svg class="a" style="left:171.5px;top:164px;" width="6" height="4"><path d="M0.8 0.8L3 3L5.2 0.8" fill="none" stroke="#fff" stroke-width="0.9"/></svg>
<svg class="a" style="left:181px;top:163px;" width="6" height="6"><path d="M0.5 0.8H5.5M0.8 2.5L3 4.8L5.2 2.5" fill="none" stroke="#fff" stroke-width=".8"/></svg>
<div class="t" style="left:203.90px;top:161.55px;font-size:7px;color:#fff;letter-spacing:-0.263px;">About our idea of old age_MUS_27.10.22 • bu bilgisayar konumuna kaydedildi</div>
<svg class="a" style="left:428px;top:164px;" width="6" height="4"><path d="M0.8 0.8L3 3L5.2 0.8" fill="none" stroke="#fff" stroke-width="0.9"/></svg>
<div class="a" style="left:445.4px;top:158.3px;width:175.2px;height:13.2px;background:#fec6b2;"></div>
<svg class="a" style="left:455.5px;top:161px;" width="9" height="9"><circle cx="5.3" cy="3.7" r="3" fill="none" stroke="#5a3a30" stroke-width=".9"/><path d="M3.2 5.8L0.8 8.2" stroke="#5a3a30" stroke-width=".9"/></svg>
<div class="t" style="left:471.50px;top:161.85px;font-size:7px;color:#5a3a30;letter-spacing:-0.291px;">Ara (Alt+Ğ)</div>
<div class="t" style="left:632.00px;top:161.55px;font-size:7px;color:#fff;letter-spacing:-0.820px;">AHMET AYTEPE</div>
<div class="a" style="left:682px;top:158.8px;width:12.4px;height:12.4px;background:#6f7a86;border-radius:50%;"></div>
<div class="t" style="left:684.30px;top:162.75px;font-size:5px;color:#fff;letter-spacing:0.825px;">AA</div>
<svg class="a" style="left:709px;top:159.5px;" width="10" height="11"><path d="M2 9L8 2.5L9.3 3.8L3.3 10.2L1.3 10.5Z" fill="none" stroke="#fff" stroke-width=".9"/><path d="M1 10.5H9" stroke="#fff" stroke-width=".6"/></svg>
<svg class="a" style="left:734px;top:160.5px;" width="9" height="9"><rect x="0.5" y="0.5" width="8" height="8" fill="none" stroke="#fff" stroke-width=".9"/><path d="M0.5 3H8.5M3.5 3V8.5" stroke="#fff" stroke-width=".9"/></svg>
<div class="a" style="left:759px;top:164.5px;width:6px;height:1px;background:#fff;"></div>
<svg class="a" style="left:783px;top:161.5px;" width="7" height="7"><rect x="0.5" y="1.8" width="4.8" height="4.8" fill="none" stroke="#fff" stroke-width=".9"/><path d="M1.8 1.8V0.6H6.4V5.2H5.3" fill="none" stroke="#fff" stroke-width=".9"/></svg>
<svg class="a" style="left:807.5px;top:161.5px;" width="7" height="7"><path d="M0.5 0.5L6.5 6.5M6.5 0.5L0.5 6.5" stroke="#fff" stroke-width="1"/></svg>
<div class="a" style="left:6px;top:173.5px;width:817px;height:68px;background:#f3f2f1;"></div>
<div class="a" style="left:6px;top:241px;width:817px;height:1.5px;background:#dedede;"></div>
<div class="t" style="left:12.30px;top:178.43px;font-size:8.2px;color:#3b3b3b;letter-spacing:-0.822px;">Dosya</div>
<div class="t" style="left:45.50px;top:178.43px;font-size:8.2px;color:#262626;letter-spacing:-0.588px;">Giriş</div>
<div class="t" style="left:70.70px;top:178.43px;font-size:8.2px;color:#3b3b3b;letter-spacing:-1.016px;">Ekle</div>
<div class="t" style="left:95.60px;top:178.43px;font-size:8.2px;color:#3b3b3b;letter-spacing:-1.124px;">Çiz</div>
<div class="t" style="left:116.80px;top:178.43px;font-size:8.2px;color:#3b3b3b;letter-spacing:-0.742px;">Tasarım</div>
<div class="t" style="left:152.80px;top:178.43px;font-size:8.2px;color:#3b3b3b;letter-spacing:-0.742px;">Geçişler</div>
<div class="t" style="left:189.00px;top:178.43px;font-size:8.2px;color:#3b3b3b;letter-spacing:-0.517px;">Animasyonlar</div>
<div class="t" style="left:245.00px;top:178.43px;font-size:8.2px;color:#3b3b3b;letter-spacing:-0.518px;">Slayt Gösterisi</div>
<div class="t" style="left:302.00px;top:178.43px;font-size:8.2px;color:#3b3b3b;letter-spacing:-0.599px;">Gözden Geçir</div>
<div class="t" style="left:357.30px;top:178.43px;font-size:8.2px;color:#3b3b3b;letter-spacing:-0.582px;">Görünüm</div>
<div class="t" style="left:399.80px;top:178.43px;font-size:8.2px;color:#3b3b3b;letter-spacing:-0.666px;">Yardım</div>
<div class="a" style="left:45.5px;top:188px;width:14.5px;height:1.6px;background:#b7472a;"></div>
<div class="a" style="left:705.8px;top:176.8px;width:15.7px;height:10.7px;background:#fff;border-radius:1px;"></div>
<svg class="a" style="left:710px;top:179px;" width="8" height="7"><path d="M0.5 0.5H7.5V4.8H3L1 6.5V4.8H0.5Z" fill="none" stroke="#555" stroke-width=".8"/></svg>
<div class="a" style="left:726.7px;top:176.8px;width:40px;height:10.7px;background:#fff;border-radius:1px;"></div>
<svg class="a" style="left:730px;top:178.5px;" width="8" height="8"><circle cx="4" cy="4" r="3.3" fill="none" stroke="#b7472a" stroke-width=".9"/><circle cx="4" cy="4" r="1.7" fill="#b7472a"/></svg>
<div class="t" style="left:740.00px;top:178.37px;font-size:7.8px;color:#b7472a;font-weight:bold;letter-spacing:-0.303px;">Kaydet</div>
<div class="a" style="left:772px;top:176.8px;width:44px;height:10.7px;background:#fff;border-radius:1px;"></div>
<svg class="a" style="left:775px;top:178.5px;" width="8" height="8"><path d="M1 3.5V7.5H7V3.5" fill="none" stroke="#b7472a" stroke-width=".8"/><path d="M4 5.5V0.8M2.3 2.3L4 0.8L5.7 2.3" fill="none" stroke="#b7472a" stroke-width=".8"/></svg>
<div class="t" style="left:785.50px;top:178.37px;font-size:7.8px;color:#b7472a;font-weight:bold;letter-spacing:-0.645px;">Paylaş</div>
<svg class="a" style="left:810px;top:181px;" width="6" height="4"><path d="M0.8 0.8L3 3L5.2 0.8" fill="none" stroke="#b7472a" stroke-width="0.9"/></svg>
<div class="a" style="left:57.5px;top:193px;width:0.8px;height:45px;background:#d2d0ce;"></div>
<div class="a" style="left:172.8px;top:193px;width:0.8px;height:45px;background:#d2d0ce;"></div>
<div class="a" style="left:329.6px;top:193px;width:0.8px;height:45px;background:#d2d0ce;"></div>
<div class="a" style="left:444.4px;top:193px;width:0.8px;height:45px;background:#d2d0ce;"></div>
<div class="a" style="left:637.5px;top:193px;width:0.8px;height:45px;background:#d2d0ce;"></div>
<div class="a" style="left:692.3px;top:193px;width:0.8px;height:45px;background:#d2d0ce;"></div>
<div class="a" style="left:722.7px;top:193px;width:0.8px;height:45px;background:#d2d0ce;"></div>
<div class="a" style="left:760.5px;top:193px;width:0.8px;height:45px;background:#d2d0ce;"></div>
<div class="t" style="left:21.50px;top:234.15px;font-size:6.3px;color:#555;letter-spacing:-1.003px;">Pano</div>
<div class="t" style="left:106.00px;top:234.15px;font-size:6.3px;color:#555;letter-spacing:-0.487px;">Slaytlar</div>
<div class="t" style="left:236.00px;top:234.15px;font-size:6.3px;color:#555;letter-spacing:-0.361px;">Yazı Tipi</div>
<div class="t" style="left:371.80px;top:234.15px;font-size:6.3px;color:#555;letter-spacing:-0.370px;">Paragraf</div>
<div class="t" style="left:530.00px;top:234.15px;font-size:6.3px;color:#555;letter-spacing:-0.688px;">Çizim</div>
<div class="t" style="left:650.80px;top:234.15px;font-size:6.3px;color:#555;letter-spacing:-0.585px;">Düzenleme</div>
<div class="t" style="left:702.70px;top:234.15px;font-size:6.3px;color:#555;letter-spacing:-0.784px;">Ses</div>
<div class="t" style="left:729.80px;top:234.15px;font-size:6.3px;color:#555;letter-spacing:-0.526px;">Tasarımcı</div>
<svg class="a" style="left:52.3px;top:234px;" width="5" height="5"><path d="M0.5 0.5H4.5V4.5M1.5 1.5L4.2 4.2" fill="none" stroke="#777" stroke-width=".6"/></svg>
<svg class="a" style="left:324.4px;top:234px;" width="5" height="5"><path d="M0.5 0.5H4.5V4.5M1.5 1.5L4.2 4.2" fill="none" stroke="#777" stroke-width=".6"/></svg>
<svg class="a" style="left:440.7px;top:234px;" width="5" height="5"><path d="M0.5 0.5H4.5V4.5M1.5 1.5L4.2 4.2" fill="none" stroke="#777" stroke-width=".6"/></svg>
<svg class="a" style="left:633px;top:234px;" width="5" height="5"><path d="M0.5 0.5H4.5V4.5M1.5 1.5L4.2 4.2" fill="none" stroke="#777" stroke-width=".6"/></svg>
<svg class="a" style="left:812.8px;top:235px;" width="6" height="4"><path d="M0.8 3L3 0.8L5.2 3" fill="none" stroke="#555" stroke-width="0.9"/></svg>
<svg class="a" style="left:15px;top:193px;" width="17" height="18"><rect x="1" y="3" width="13" height="14" rx="1" fill="#f4d18a" stroke="#c79a3d" stroke-width=".8"/><rect x="4.5" y="1" width="6" height="3.5" rx="1" fill="#fff" stroke="#777" stroke-width=".8"/><rect x="7" y="7" width="9" height="10" fill="#fff" stroke="#777" stroke-width=".8"/></svg>
<div class="t" style="left:10.80px;top:212.55px;font-size:7px;color:#444;letter-spacing:-0.299px;">Yapıştır</div>
<svg class="a" style="left:18px;top:223px;" width="6" height="4"><path d="M0.8 0.8L3 3L5.2 0.8" fill="none" stroke="#666" stroke-width="0.8"/></svg>
<svg class="a" style="left:36px;top:194px;" width="8" height="8"><path d="M1.5 0.5L6 6.5M6.5 0.5L2 6.5" stroke="#888" stroke-width=".8"/><circle cx="1.8" cy="6.3" r="1.2" fill="none" stroke="#888" stroke-width=".7"/><circle cx="6.2" cy="6.3" r="1.2" fill="none" stroke="#888" stroke-width=".7"/></svg>
<svg class="a" style="left:35px;top:207px;" width="14" height="8"><rect x="0.5" y="0.5" width="5" height="6" fill="none" stroke="#888" stroke-width=".8"/><rect x="2.5" y="2" width="5" height="5.5" fill="#fff" stroke="#888" stroke-width=".8"/><path d="M10 3L11.5 4.5L13 3" fill="none" stroke="#888" stroke-width=".7"/></svg>
<svg class="a" style="left:36px;top:220px;" width="8" height="8"><path d="M1 6L4 3M3.5 1.5H7V3.5H3.5Z" fill="none" stroke="#888" stroke-width=".8"/></svg>
<svg class="a" style="left:65px;top:194px;" width="16" height="15"><rect x="0.8" y="3" width="14" height="11" fill="#fff" stroke="#777" stroke-width=".9"/><path d="M0.8 6.5H14.8M7 6.5V14" stroke="#777" stroke-width=".8"/><path d="M3.5 0V5M1 2.5H6" stroke="#4aa564" stroke-width="1.1"/></svg>
<div class="t" style="left:66.30px;top:212.05px;font-size:7px;color:#444;letter-spacing:-0.290px;">Yeni</div>
<div class="t" style="left:64.50px;top:221.05px;font-size:7px;color:#444;letter-spacing:-0.394px;">Slayt</div>
<svg class="a" style="left:80px;top:222.5px;" width="6" height="4"><path d="M0.8 0.8L3 3L5.2 0.8" fill="none" stroke="#666" stroke-width="0.8"/></svg>
<svg class="a" style="left:97.5px;top:194px;" width="18" height="15"><rect x="0.8" y="0.8" width="14" height="11" fill="#fff" stroke="#777" stroke-width=".9"/><rect x="3" y="3" width="10" height="7" fill="#e6e6e6"/><circle cx="12" cy="10" r="3.5" fill="#fff" stroke="#3a8fd9" stroke-width="1"/><path d="M14.5 12.5L17 15" stroke="#3a8fd9" stroke-width="1.1"/></svg>
<div class="t" style="left:94.70px;top:212.05px;font-size:7px;color:#444;letter-spacing:-0.309px;">Slaytları</div>
<div class="t" style="left:85.20px;top:221.05px;font-size:7px;color:#444;letter-spacing:-0.380px;">Yeniden Kullan</div>
<svg class="a" style="left:130px;top:193.8px;" width="9" height="8"><rect x="0.5" y="0.5" width="8" height="7" fill="#fff" stroke="#6d8fb5" stroke-width=".8"/><path d="M0.5 3H8.5" stroke="#6d8fb5" stroke-width=".8"/></svg>
<div class="t" style="left:139.80px;top:194.85px;font-size:7px;color:#444;letter-spacing:-0.508px;">Düzen</div>
<svg class="a" style="left:159.5px;top:196.8px;" width="6" height="4"><path d="M0.8 0.8L3 3L5.2 0.8" fill="none" stroke="#666" stroke-width="0.8"/></svg>
<svg class="a" style="left:130px;top:206.7px;" width="9" height="8"><rect x="0.5" y="0.5" width="8" height="7" fill="#fff" stroke="#6d8fb5" stroke-width=".8"/><path d="M0.5 3H8.5" stroke="#6d8fb5" stroke-width=".8"/></svg>
<div class="t" style="left:139.80px;top:207.75px;font-size:7px;color:#444;letter-spacing:-0.351px;">Sıfırla</div>
<svg class="a" style="left:130px;top:219.6px;" width="9" height="8"><rect x="0.5" y="0.5" width="8" height="7" fill="#e8f2e0" stroke="#4aa564" stroke-width=".8"/><path d="M0.5 3H8.5" stroke="#4aa564" stroke-width=".8"/></svg>
<div class="t" style="left:139.80px;top:220.65px;font-size:7px;color:#444;letter-spacing:-0.411px;">Bölüm</div>
<svg class="a" style="left:159.5px;top:222.6px;" width="6" height="4"><path d="M0.8 0.8L3 3L5.2 0.8" fill="none" stroke="#666" stroke-width="0.8"/></svg>
<div class="a" style="left:175.9px;top:196.7px;width:82.4px;height:12.3px;background:#e1dfdd;border:1px solid #d2d0ce;"></div>
<div class="a" style="left:259.2px;top:196.7px;width:24.3px;height:12.3px;background:#e1dfdd;border:1px solid #d2d0ce;"></div>
<svg class="a" style="left:251px;top:201.5px;" width="6" height="4"><path d="M0.8 0.8L3 3L5.2 0.8" fill="none" stroke="#999" stroke-width="0.8"/></svg>
<svg class="a" style="left:276px;top:201.5px;" width="6" height="4"><path d="M0.8 0.8L3 3L5.2 0.8" fill="none" stroke="#999" stroke-width="0.8"/></svg>
<div class="t" style="left:286.00px;top:198.78px;font-size:8.5px;color:#666;">A</div>
<div class="t" style="left:292.00px;top:195.90px;font-size:6px;color:#666;">ˆ</div>
<div class="t" style="left:299.00px;top:199.62px;font-size:7.5px;color:#666;">A</div>
<div class="t" style="left:305.00px;top:195.90px;font-size:6px;color:#666;">ˇ</div>
<div class="t" style="left:315.00px;top:198.78px;font-size:8.5px;color:#888;">A</div>
<div class="t" style="left:180.00px;top:216.62px;font-size:7.5px;color:#666;font-weight:bold;">K</div>
<div class="t" style="left:193.00px;top:216.62px;font-size:7.5px;color:#888;">T</div>
<div class="t" style="left:206.00px;top:216.62px;font-size:7.5px;color:#888;">A</div>
<div class="a" style="left:205.5px;top:224px;width:6px;height:0.8px;background:#888;"></div>
<div class="t" style="left:219.00px;top:216.62px;font-size:7.5px;color:#888;">S</div>
<div class="t" style="left:229.00px;top:217.47px;font-size:6.5px;color:#888;">abc</div>
<div class="a" style="left:228.5px;top:220.5px;width:9px;height:0.8px;background:#888;"></div>
<div class="t" style="left:243.00px;top:216.62px;font-size:7.5px;color:#888;">AV</div>
<svg class="a" style="left:253px;top:219.5px;" width="6" height="4"><path d="M0.8 0.8L3 3L5.2 0.8" fill="none" stroke="#888" stroke-width="0.7"/></svg>
<div class="t" style="left:263.00px;top:216.62px;font-size:7.5px;color:#888;">Aa</div>
<svg class="a" style="left:272px;top:219.5px;" width="6" height="4"><path d="M0.8 0.8L3 3L5.2 0.8" fill="none" stroke="#888" stroke-width="0.7"/></svg>
<svg class="a" style="left:286px;top:214.5px;" width="10" height="10"><path d="M2 7L7 1.5L8.5 3L3.5 8.5Z" fill="none" stroke="#888" stroke-width=".8"/></svg>
<div class="a" style="left:286px;top:223.5px;width:11px;height:1.6px;background:#999;"></div>
<svg class="a" style="left:297px;top:219.5px;" width="6" height="4"><path d="M0.8 0.8L3 3L5.2 0.8" fill="none" stroke="#888" stroke-width="0.7"/></svg>
<div class="t" style="left:308.00px;top:215.20px;font-size:8px;color:#888;">A</div>
<div class="a" style="left:307px;top:223.5px;width:10px;height:1.6px;background:#999;"></div>
<svg class="a" style="left:318px;top:219.5px;" width="6" height="4"><path d="M0.8 0.8L3 3L5.2 0.8" fill="none" stroke="#888" stroke-width="0.7"/></svg>
<svg class="a" style="left:335px;top:197.5px;" width="16" height="10"><circle cx="1.5" cy="1.5" r="1" fill="#888"/><circle cx="1.5" cy="5" r="1" fill="#888"/><circle cx="1.5" cy="8.5" r="1" fill="#888"/><path d="M4 1.5H11M4 5H11M4 8.5H11" stroke="#888" stroke-width=".8"/><path d="M13 4L14.5 5.5L16 4" fill="none" stroke="#888" stroke-width=".7"/></svg>
<svg class="a" style="left:356.7px;top:197.5px;" width="16" height="10"><path d="M1 0.5V3M0.5 6H2V7.5H0.5V9H2M4 1.5H11M4 5H11M4 8.5H11" fill="none" stroke="#888" stroke-width=".8"/><path d="M13 4L14.5 5.5L16 4" fill="none" stroke="#888" stroke-width=".7"/></svg>
<svg class="a" style="left:377.6px;top:197.5px;" width="9" height="10"><path d="M0.5 1H8.5M4 4H8.5M4 6H8.5M0.5 9H8.5M2.5 3.5L0.5 5L2.5 6.5" fill="none" stroke="#888" stroke-width=".8"/></svg>
<svg class="a" style="left:390px;top:197.5px;" width="9" height="10"><path d="M0.5 1H8.5M4 4H8.5M4 6H8.5M0.5 9H8.5M0.5 3.5L2.5 5L0.5 6.5" fill="none" stroke="#888" stroke-width=".8"/></svg>
<svg class="a" style="left:403.4px;top:197px;" width="17" height="11"><path d="M5 1.5H12M5 5H12M5 8.5H12M2 0.5V10M0.5 2L2 0.5L3.5 2M0.5 8.5L2 10L3.5 8.5" fill="none" stroke="#888" stroke-width=".8"/><path d="M14 4.5L15.2 5.7L16.5 4.5" fill="none" stroke="#888" stroke-width=".7"/></svg>
<svg class="a" style="left:424px;top:197px;" width="14" height="11"><path d="M2 0.5V10M0.5 8.5L2 10L3.5 8.5M6 10V0.5M4.5 2L6 0.5L7.5 2" fill="none" stroke="#888" stroke-width=".8"/><path d="M10 4.5L11.2 5.7L12.5 4.5" fill="none" stroke="#888" stroke-width=".7"/></svg>
<svg class="a" style="left:335px;top:215px;" width="9" height="9"><path d="M0.5 1H8.5M0.5 3.5H6M0.5 6H8.5M0.5 8.5H6" stroke="#888" stroke-width=".8"/></svg>
<svg class="a" style="left:347.5px;top:215px;" width="9" height="9"><path d="M0.5 1H8.5M2 3.5H7M0.5 6H8.5M2 8.5H7" stroke="#888" stroke-width=".8"/></svg>
<svg class="a" style="left:361.3px;top:215px;" width="9" height="9"><path d="M0.5 1H8.5M3 3.5H8.5M0.5 6H8.5M3 8.5H8.5" stroke="#888" stroke-width=".8"/></svg>
<svg class="a" style="left:373.6px;top:215px;" width="9" height="9"><path d="M0.5 1H8.5M0.5 3.5H8.5M0.5 6H8.5M0.5 8.5H8.5" stroke="#888" stroke-width=".8"/></svg>
<svg class="a" style="left:389px;top:215px;" width="16" height="9"><path d="M0.5 1H4.5M0.5 3.5H4.5M0.5 6H4.5M0.5 8.5H4.5M6.5 1H10.5M6.5 3.5H10.5M6.5 6H10.5M6.5 8.5H10.5" stroke="#aaa" stroke-width=".8"/><path d="M13 3.5L14.2 4.7L15.5 3.5" fill="none" stroke="#aaa" stroke-width=".7"/></svg>
<svg class="a" style="left:424px;top:206.5px;" width="14" height="9"><rect x="0.5" y="0.5" width="8" height="7.5" fill="none" stroke="#888" stroke-width=".8"/><path d="M2.5 3H6.5M2.5 5.5H6.5" stroke="#888" stroke-width=".8"/><path d="M10 3.5L11.2 4.7L12.5 3.5" fill="none" stroke="#888" stroke-width=".7"/></svg>
<svg class="a" style="left:424px;top:219px;" width="14" height="9"><path d="M1 0.5H5V3H3L1 5Z" fill="none" stroke="#888" stroke-width=".7"/><rect x="4" y="3" width="5" height="5" fill="none" stroke="#888" stroke-width=".7"/><path d="M10 3.5L11.2 4.7L12.5 3.5" fill="none" stroke="#888" stroke-width=".7"/></svg>
<div class="a" style="left:450px;top:193px;width:70.7px;height:33px;background:#fff;border:1px solid #d2d0ce;"></div>
<svg class="a" style="left:453px;top:195px;" width="60" height="29">
      <rect x="0.5" y="0.5" width="8" height="7" fill="#dbe8f6" stroke="#3a78c9" stroke-width=".8"/><text x="2" y="6.5" font-size="6" fill="#3a78c9" font-family="Liberation Sans">A</text>
      <path d="M12 0.5L19 7.5M22 0.5L29 7.5M27 6.5L29 7.5L28.5 5.3" fill="none" stroke="#555" stroke-width=".8"/>
      <rect x="32" y="1" width="8.5" height="6.5" fill="none" stroke="#555" stroke-width=".8"/>
      <ellipse cx="47" cy="4.3" rx="4.5" ry="3.3" fill="none" stroke="#555" stroke-width=".8"/>
      <rect x="53" y="1" width="7" height="6.5" rx="2" fill="none" stroke="#555" stroke-width=".8"/>
      <path d="M0.5 18L4.5 11L8.5 18Z" fill="none" stroke="#555" stroke-width=".8"/>
      <path d="M11 11.5H15V17.5H19M22 11.5H25V17.5H28.5" fill="none" stroke="#555" stroke-width=".8"/>
      <path d="M32 13H36V11L40 14.5L36 18V16H32Z" fill="none" stroke="#555" stroke-width=".8"/>
      <path d="M44 11V15H42L46 18.5L50 15H48V11Z" fill="none" stroke="#555" stroke-width=".8"/>
      <path d="M53 11H58L60 13V18H53Z" fill="none" stroke="#555" stroke-width=".8"/>
      <path d="M1 27C0 22 5 21 7 22C8 23 6 27 3 26" fill="none" stroke="#555" stroke-width=".8"/>
      <path d="M11 27C12 23 16 21 19 22" fill="none" stroke="#555" stroke-width=".8"/>
      <path d="M22 27C23 21 27 21 29 27" fill="none" stroke="#555" stroke-width=".8"/>
      <path d="M36 21C34 21 35 24 33 24C35 24 34 27 36 27" fill="none" stroke="#555" stroke-width=".8"/>
      <path d="M43 21C45 21 44 24 46 24C44 24 45 27 43 27" fill="none" stroke="#555" stroke-width=".8"/>
      <path d="M56 20.5L57.5 23.5L60.5 23.8L58.3 26L59 29L56 27.5L53 29L53.7 26L51.5 23.8L54.5 23.5Z" fill="none" stroke="#555" stroke-width=".8"/></svg>
<div class="a" style="left:513px;top:193px;width:7.7px;height:33px;background:#fff;border-left:1px solid #d2d0ce;"></div>
<div class="a" style="left:513px;top:204px;width:7.7px;height:11px;background:#fff;border:1px solid #d2d0ce;"></div>
<div class="a" style="left:513px;top:215px;width:7.7px;height:11px;background:#fff;border:1px solid #d2d0ce;"></div>
<svg class="a" style="left:514px;top:208.5px;" width="6" height="4"><path d="M0.8 0.8L3 3L5.2 0.8" fill="none" stroke="#444" stroke-width="0.8"/></svg>
<svg class="a" style="left:514px;top:219.5px;" width="6" height="4"><path d="M0.8 0.8L3 3L5.2 0.8" fill="none" stroke="#444" stroke-width="0.8"/></svg>
<svg class="a" style="left:514px;top:197.5px;" width="6" height="4"><path d="M0.8 3L3 0.8L5.2 3" fill="none" stroke="#aaa" stroke-width="0.8"/></svg>
<svg class="a" style="left:526px;top:194px;" width="17" height="16"><rect x="0.5" y="0.5" width="9" height="9" fill="#fff" stroke="#666" stroke-width=".9"/><rect x="6" y="6" width="10" height="9.5" fill="#f6d489" stroke="#c99a3a" stroke-width=".9"/><rect x="9" y="9" width="6" height="6" fill="#fff" stroke="#666" stroke-width=".8"/></svg>
<div class="t" style="left:522.50px;top:212.05px;font-size:7px;color:#444;letter-spacing:-0.278px;">Yerleştir</div>
<svg class="a" style="left:531px;top:222.5px;" width="6" height="4"><path d="M0.8 0.8L3 3L5.2 0.8" fill="none" stroke="#666" stroke-width="0.8"/></svg>
<svg class="a" style="left:550.5px;top:194px;" width="17" height="17"><rect x="0.5" y="0.5" width="16" height="16" rx="1" fill="#eee" stroke="#bbb" stroke-width=".8"/><path d="M5 14L14 5" stroke="#bbb" stroke-width="1"/></svg>
<div class="t" style="left:552.50px;top:212.05px;font-size:7px;color:#999;letter-spacing:-0.375px;">Hızlı</div>
<div class="t" style="left:547.00px;top:221.05px;font-size:7px;color:#999;letter-spacing:-0.083px;">Stiller</div>
<svg class="a" style="left:565px;top:222.5px;" width="6" height="4"><path d="M0.8 0.8L3 3L5.2 0.8" fill="none" stroke="#aaa" stroke-width="0.8"/></svg>
<svg class="a" style="left:573px;top:193.8px;" width="8" height="8"><rect x="0.5" y="1" width="7" height="6.5" fill="none" stroke="#aaa" stroke-width=".8"/></svg>
<div class="t" style="left:583.00px;top:194.85px;font-size:7px;color:#a0a0a0;letter-spacing:-0.734px;">Şekil Dolgusu</div>
<svg class="a" style="left:621px;top:196.8px;" width="6" height="4"><path d="M0.8 0.8L3 3L5.2 0.8" fill="none" stroke="#aaa" stroke-width="0.8"/></svg>
<svg class="a" style="left:573px;top:206.1px;" width="8" height="8"><rect x="0.5" y="1" width="7" height="6.5" fill="none" stroke="#aaa" stroke-width=".8"/></svg>
<div class="t" style="left:583.00px;top:207.15px;font-size:7px;color:#a0a0a0;letter-spacing:-0.637px;">Şekil Ana Hattı</div>
<svg class="a" style="left:621px;top:209.1px;" width="6" height="4"><path d="M0.8 0.8L3 3L5.2 0.8" fill="none" stroke="#aaa" stroke-width="0.8"/></svg>
<svg class="a" style="left:573px;top:218.4px;" width="8" height="8"><rect x="0.5" y="1" width="7" height="6.5" fill="none" stroke="#aaa" stroke-width=".8"/></svg>
<div class="t" style="left:583.00px;top:219.45px;font-size:7px;color:#a0a0a0;letter-spacing:-0.459px;">Şekil Efektleri</div>
<svg class="a" style="left:621px;top:221.4px;" width="6" height="4"><path d="M0.8 0.8L3 3L5.2 0.8" fill="none" stroke="#aaa" stroke-width="0.8"/></svg>
<svg class="a" style="left:643.7px;top:194px;" width="8" height="9"><circle cx="5" cy="3.3" r="2.8" fill="none" stroke="#555" stroke-width=".9"/><path d="M3 5.5L0.8 8" stroke="#555" stroke-width=".9"/></svg>
<div class="t" style="left:652.00px;top:195.05px;font-size:7px;color:#444;letter-spacing:-0.058px;">Bul</div>
<svg class="a" style="left:643.7px;top:206px;" width="9" height="9"><path d="M1 3.5C1.5 1.5 4 0.5 6 2M8 5.5C7.5 7.5 5 8.5 3 7" fill="none" stroke="#3a78c9" stroke-width=".9"/><text x="4" y="5" font-size="4.5" fill="#b7472a" font-family="Liberation Sans">b</text></svg>
<div class="t" style="left:654.00px;top:207.05px;font-size:7px;color:#444;letter-spacing:-0.104px;">Değiştir</div>
<svg class="a" style="left:680px;top:209px;" width="6" height="4"><path d="M0.8 0.8L3 3L5.2 0.8" fill="none" stroke="#666" stroke-width="0.8"/></svg>
<svg class="a" style="left:644.5px;top:218px;" width="8" height="9"><path d="M1 0.5V7.5L3 5.8L4.5 8.5L5.5 8L4.2 5.3L6.8 5.2Z" fill="#fff" stroke="#555" stroke-width=".8"/></svg>
<div class="t" style="left:654.00px;top:219.55px;font-size:7px;color:#444;letter-spacing:-1.038px;">Seç</div>
<svg class="a" style="left:664.5px;top:221.5px;" width="6" height="4"><path d="M0.8 0.8L3 3L5.2 0.8" fill="none" stroke="#666" stroke-width="0.8"/></svg>
<svg class="a" style="left:702px;top:193px;" width="12" height="18"><rect x="2.5" y="0.5" width="7" height="11" rx="3.5" fill="#5aa0e6" stroke="#3a78c9" stroke-width=".8"/><path d="M0.8 8C0.8 11.5 3 13.5 6 13.5C9 13.5 11.2 11.5 11.2 8M6 13.5V17" fill="none" stroke="#555" stroke-width=".9"/></svg>
<div class="t" style="left:700.00px;top:212.05px;font-size:7px;color:#444;letter-spacing:-0.165px;">Dikte</div>
<svg class="a" style="left:704.8px;top:222.5px;" width="6" height="4"><path d="M0.8 0.8L3 3L5.2 0.8" fill="none" stroke="#666" stroke-width="0.8"/></svg>
<svg class="a" style="left:732.5px;top:193px;" width="18" height="18"><rect x="3" y="4" width="14" height="13" fill="#fff" stroke="#666" stroke-width=".9"/><rect x="5" y="8" width="10" height="7" fill="#e6e6e6" stroke="#888" stroke-width=".6"/><path d="M5 0.5L1 8H4L2 13L8 5H5L7 0.5Z" fill="#f2b52e" stroke="#c98a1a" stroke-width=".5"/></svg>
<div class="t" style="left:727.60px;top:212.05px;font-size:7px;color:#444;letter-spacing:-0.368px;">Tasarımcı</div>
<div class="a" style="left:6px;top:242.5px;width:809px;height:339.5px;background:#e7e7e9;"></div>
<div class="a" style="left:145px;top:242.5px;width:1px;height:339.5px;background:#d6d6d8;"></div>
<div class="t" style="left:13.20px;top:250.55px;font-size:7px;color:#c55a3e;">1</div>
<div class="a" style="left:815px;top:242.5px;width:8px;height:339.5px;background:#e6e6e6;"></div>
<div class="a" style="left:815px;top:243px;width:7.5px;height:153.5px;background:#fff;border:1px solid #d0d0d0;"></div>
<div class="a" style="left:815px;top:243px;width:7.5px;height:7px;background:#fff;"></div>
<svg class="a" style="left:816.5px;top:245px;" width="5" height="3"><path d="M0 3L2.5 0L5 3Z" fill="#666"/></svg>
<div class="a" style="left:815px;top:545px;width:7.5px;height:7px;background:#fff;"></div>
<svg class="a" style="left:816.5px;top:547.5px;" width="5" height="3"><path d="M0 0L2.5 3L5 0Z" fill="#666"/></svg>
<svg class="a" style="left:816px;top:555px;" width="6" height="6"><path d="M0.5 3L3 0.5L5.5 3M0.5 5.5H5.5" fill="none" stroke="#666" stroke-width=".8"/></svg>
<svg class="a" style="left:816px;top:564px;" width="6" height="6"><path d="M0.5 0.5L3 3L5.5 0.5M0.5 3L3 5.5L5.5 3" fill="none" stroke="#666" stroke-width=".8"/></svg>
<div class="a" style="left:6px;top:582px;width:817px;height:12px;background:#f3f2f1;border-top:1px solid #d6d6d6;"></div>
<div class="t" style="left:10.50px;top:585.44px;font-size:6.3px;color:#666;letter-spacing:-0.380px;">Slayt 1 / 1</div>
<svg class="a" style="left:52.5px;top:585px;" width="8" height="7"><path d="M1 1H7M4 1V6.5M2 6.5L4 4.5L6 6.5" fill="none" stroke="#666" stroke-width=".8"/></svg>
<div class="t" style="left:62.40px;top:585.44px;font-size:6.3px;color:#666;letter-spacing:-0.354px;">Erişilebilirlik: Her şey hazır</div>
<svg class="a" style="left:597.5px;top:584.5px;" width="8" height="8"><path d="M1 3L4 0.8L7 3M0.5 5H7.5M0.5 7H7.5" fill="none" stroke="#666" stroke-width=".7"/></svg>
<div class="t" style="left:606.00px;top:585.44px;font-size:6.3px;color:#555;letter-spacing:0.136px;">Notlar</div>
<div class="a" style="left:634.4px;top:583.6px;width:19.1px;height:10.4px;background:#dcdcdc;"></div>
<svg class="a" style="left:639.5px;top:585px;" width="9" height="7"><rect x="0.5" y="0.5" width="8" height="6" fill="none" stroke="#555" stroke-width=".8"/><path d="M3 0.5V6.5M3 2.5H8.5" stroke="#555" stroke-width=".6"/></svg>
<svg class="a" style="left:661.5px;top:585px;" width="9" height="7"><rect x="0.5" y="0.5" width="3.3" height="2.5" fill="none" stroke="#666" stroke-width=".7"/><rect x="5" y="0.5" width="3.3" height="2.5" fill="none" stroke="#666" stroke-width=".7"/><rect x="0.5" y="4" width="3.3" height="2.5" fill="none" stroke="#666" stroke-width=".7"/><rect x="5" y="4" width="3.3" height="2.5" fill="none" stroke="#666" stroke-width=".7"/></svg>
<svg class="a" style="left:682px;top:585px;" width="9" height="7"><rect x="0.5" y="0.5" width="8" height="6" fill="none" stroke="#666" stroke-width=".7"/><path d="M4.5 0.5V6.5M2 2H3.5M2 4H3.5M5.5 2H7M5.5 4H7" stroke="#666" stroke-width=".6"/></svg>
<svg class="a" style="left:703.5px;top:584.5px;" width="8" height="8"><path d="M0.5 1H7.5M1 1V5H7V1M4 5V7.5M2.5 7.5H5.5" fill="none" stroke="#666" stroke-width=".7"/></svg>
<div class="a" style="left:721px;top:588.5px;width:4px;height:0.8px;background:#777;"></div>
<div class="a" style="left:728px;top:588.5px;width:54px;height:0.8px;background:#999;"></div>
<div class="a" style="left:750.5px;top:585.5px;width:1.8px;height:6px;background:#555;"></div>
<svg class="a" style="left:785px;top:585.5px;" width="6" height="6"><path d="M3 0.5V5.5M0.5 3H5.5" stroke="#777" stroke-width=".8"/></svg>
<div class="t" style="left:795.30px;top:585.70px;font-size:6px;color:#666;letter-spacing:-0.050px;">%86</div>
<svg class="a" style="left:812px;top:584px;" width="10" height="10"><path d="M5 0.5L7 2.5H6V4H7.5V3L9.5 5L7.5 7V6H6V7.5H7L5 9.5L3 7.5H4V6H2.5V7L0.5 5L2.5 3V4H4V2.5H3Z" fill="none" stroke="#555" stroke-width=".7"/></svg>
<div class="a" style="left:189px;top:245.6px;width:584px;height:330px;background:#fff;box-shadow:0 0 1px rgba(0,0,0,.15);"></div>
<svg class="a" style="left:189px;top:245.6px;overflow:hidden;" width="584" height="96" viewBox="0 0 584 96"><defs>
      <linearGradient id="msky" x1="0" y1="0" x2="0" y2="1"><stop offset="0" stop-color="#aecfef"/><stop offset=".55" stop-color="#bcd8f1"/><stop offset="1" stop-color="#dce9f3"/></linearGradient>
      <linearGradient id="mmt" x1="0" y1="0" x2="0" y2="1"><stop offset="0" stop-color="#9aa2bc"/><stop offset=".35" stop-color="#8890ac"/><stop offset=".7" stop-color="#75809e"/><stop offset="1" stop-color="#5e6888"/></linearGradient>
      <linearGradient id="mmt2" x1="0" y1="0" x2="0" y2="1"><stop offset="0" stop-color="#dfe6ee"/><stop offset=".45" stop-color="#aebcd2"/><stop offset="1" stop-color="#7f90b0"/></linearGradient>
      <filter id="mbl" x="-30%" y="-60%" width="160%" height="220%"><feGaussianBlur stdDeviation="2.5"/></filter>
      <filter id="mbl2" x="-20%" y="-50%" width="140%" height="200%"><feGaussianBlur stdDeviation=".9"/></filter>
      <filter id="mdark" x="0" y="0" width="100%" height="100%"><feTurbulence type="fractalNoise" baseFrequency="0.08 0.04" numOctaves="3" seed="5" result="n"/><feColorMatrix in="n" type="matrix" values="0 0 0 0 0.2  0 0 0 0 0.22  0 0 0 0 0.3  0 0 0 1.6 -0.55" result="w"/><feComposite in="w" in2="SourceGraphic" operator="in"/></filter>
      <filter id="mrock" x="0" y="0" width="100%" height="100%">
        <feTurbulence type="fractalNoise" baseFrequency="0.05 0.18" numOctaves="4" seed="11" result="n"/>
        <feColorMatrix in="n" type="matrix" values="0 0 0 0 0.82  0 0 0 0 0.85  0 0 0 0 0.93  0 0 0 -1.1 0.5" result="w"/>
        <feComposite in="w" in2="SourceGraphic" operator="in"/>
      </filter>
    </defs>
    <rect x="0" y="0" width="584" height="96" fill="url(#msky)"/>
    <g filter="url(#mbl)" fill="#fff">
      <path d="M141 30C150 18 165 8 190 4C215 1 240 2 255 8C270 14 280 24 278 40L262 58L200 40Z"/>
      <ellipse cx="350" cy="72" rx="45" ry="12"/>
      <ellipse cx="425" cy="58" rx="45" ry="14"/>
      <ellipse cx="480" cy="66" rx="40" ry="11"/>
      <ellipse cx="540" cy="76" rx="45" ry="11"/>
      <ellipse cx="410" cy="82" rx="90" ry="8"/>
      <ellipse cx="565" cy="86" rx="25" ry="7"/>
    </g>
    <path d="M0 0.4L57.6 0.4L77 6.2L103 14L122.7 19.2L135.7 24.4L149 28.4L160 26L173.6 24.4L199.6 31L221.7 40.1L238.7 45.3L258.2 53.1L270 60L300 66L324 72.9L360 84L400 96H0Z" fill="url(#mmt)"/>
    <path d="M0 0.4L57.6 0.4L77 6.2L103 14L122.7 19.2L135.7 24.4L149 28.4L160 26L173.6 24.4L199.6 31L221.7 40.1L238.7 45.3L258.2 53.1L270 60L300 66L324 72.9L360 84L400 96H0Z" fill="#fff" filter="url(#mrock)"/>
    <path d="M0 0.4L57.6 0.4L77 6.2L103 14L122.7 19.2L135.7 24.4L149 28.4L160 26L173.6 24.4L199.6 31L221.7 40.1L238.7 45.3L258.2 53.1L270 60L300 66L324 72.9L360 84L400 96H0Z" fill="#000" filter="url(#mdark)" />
    <path d="M0 55.7L38 66L77 81.7L120 86L141 80.7L200 88L245 96H0Z" fill="#4a5778"/>
    <g filter="url(#mbl2)" fill="none" stroke="#e8ecf2" opacity=".75">
      <path d="M22 1.5L57 2L78 7.5L102 15.5L123 21" stroke-width="1.6"/>
      <path d="M36.5 70C45 76 60 86 73 96" stroke-width="1"/>
      <path d="M99 52L117 62.5" stroke-width="1"/>
      <path d="M154 75.5C165 76 180 79 196 80.7" stroke-width="1.4"/>
      <path d="M193 68C203 73 215 79 226 84.6" stroke-width="1.2"/>
      <path d="M214 70.7C226 75 238 79 250 83.3" stroke-width="1"/>
      <path d="M4 15L10 20" stroke-width="1"/>
      <path d="M170 48L176 52" stroke-width="1.2"/>
    </g>
    <path d="M343 96L360 86L380 79L400 72L421.6 65.8L440 72L470 80L500 83L520 85L550 86L568 90L584 96Z" fill="url(#mmt2)"/>
    <g fill="#f5f7fa" opacity=".95" filter="url(#mbl2)">
      <path d="M392 74L421.6 65.8L444 73L462 79L445 80L430 76L418 82L405 78Z"/>
      <path d="M368 82L380 79L392 80L378 85Z"/>
      <path d="M480 82L500 84L492 86Z"/>
    </g>
    <path d="M300 66L324 72.9L360 84L400 96H290Z" fill="#55607e"/>
    <g>
      <rect x="258" y="65" width="50" height="16" fill="#a3a191"/>
      <path d="M256.9 66.5Q270 52 278.5 36L280.3 33.6L282 36Q292 52 309 66.5Z" fill="#809a74"/>
      <path d="M256.9 66.5Q270 52 278.5 36L280.3 33.6L276 66.5Z" fill="#71896a"/>
      <rect x="279.9" y="22" width=".9" height="12" fill="#444"/>
      <path d="M256 66.2H309" stroke="#444a40" stroke-width="1"/>
      <rect x="263.7" y="67.4" width="7.5" height="8.6" fill="#2e2e2c"/>
      <rect x="287" y="67.4" width="8.8" height="8.6" fill="#2e2e2c"/>
      <path d="M251 96V88L262 81H304L322 88V96Z" fill="#8a9a7a"/>
      <path d="M266 90L276 82L288 90Z" fill="#92a284"/>
      <rect x="271" y="91" width="10" height="5" fill="#2e2e2c"/>
      <rect x="300" y="92" width="6" height="4" fill="#2e2e2c"/>
    </g></svg>
<div class="t" style="left:330.00px;top:374.29px;font-size:30.5px;color:#111;font-family:'Liberation Serif',serif;letter-spacing:-0.395px;">About our idea of old age</div>
<div class="t" style="left:404.90px;top:424.29px;font-size:16.4px;color:#111;font-family:'Liberation Serif',serif;letter-spacing:-0.396px;">Mus, 27th Octobre 2022</div>
<div class="t" style="left:377.50px;top:466.59px;font-size:16.4px;color:#111;font-family:'Liberation Serif',serif;letter-spacing:-0.194px;">Univ.-Prof. Dr. Bernd Seeberger</div>
<div class="t" style="left:407.50px;top:487.69px;font-size:16.4px;color:#111;font-family:'Liberation Serif',serif;letter-spacing:-0.248px;">University UMIT-Tirol</div>
<div class="t" style="left:410.80px;top:508.39px;font-size:16.4px;color:#111;font-family:'Liberation Serif',serif;letter-spacing:0.144px;">Hall in Tyrol/Austria</div>
<svg class="a" style="left:411.7px;top:400px;" width="41.0" height="2"><path d="M0 1.6 L1.5 1.6 L3.0 0.4 L4.5 1.6 L6.0 0.4 L7.5 1.6 L9.0 0.4 L10.5 1.6 L12.0 0.4 L13.5 1.6 L15.0 0.4 L16.5 1.6 L18.0 0.4 L19.5 1.6 L21.0 0.4 L22.5 1.6 L24.0 0.4 L25.5 1.6 L27.0 0.4 L28.5 1.6 L30.0 0.4 L31.5 1.6 L33.0 0.4 L34.5 1.6 L36.0 0.4 L37.5 1.6 L39.0 0.4 L40.5 1.6" fill="none" stroke="#e05050" stroke-width=".7"/></svg>
<svg class="a" style="left:459.3px;top:400px;" width="49.0" height="2"><path d="M0 1.6 L1.5 1.6 L3.0 0.4 L4.5 1.6 L6.0 0.4 L7.5 1.6 L9.0 0.4 L10.5 1.6 L12.0 0.4 L13.5 1.6 L15.0 0.4 L16.5 1.6 L18.0 0.4 L19.5 1.6 L21.0 0.4 L22.5 1.6 L24.0 0.4 L25.5 1.6 L27.0 0.4 L28.5 1.6 L30.0 0.4 L31.5 1.6 L33.0 0.4 L34.5 1.6 L36.0 0.4 L37.5 1.6 L39.0 0.4 L40.5 1.6 L42.0 0.4 L43.5 1.6 L45.0 0.4 L46.5 1.6 L48.0 0.4" fill="none" stroke="#e05050" stroke-width=".7"/></svg>
<svg class="a" style="left:546.4px;top:400px;" width="38.10000000000002" height="2"><path d="M0 1.6 L1.5 1.6 L3.0 0.4 L4.5 1.6 L6.0 0.4 L7.5 1.6 L9.0 0.4 L10.5 1.6 L12.0 0.4 L13.5 1.6 L15.0 0.4 L16.5 1.6 L18.0 0.4 L19.5 1.6 L21.0 0.4 L22.5 1.6 L24.0 0.4 L25.5 1.6 L27.0 0.4 L28.5 1.6 L30.0 0.4 L31.5 1.6 L33.0 0.4 L34.5 1.6 L36.0 0.4 L37.5 1.6" fill="none" stroke="#e05050" stroke-width=".7"/></svg>
<svg class="a" style="left:594px;top:400px;" width="39" height="2"><path d="M0 1.6 L1.5 1.6 L3.0 0.4 L4.5 1.6 L6.0 0.4 L7.5 1.6 L9.0 0.4 L10.5 1.6 L12.0 0.4 L13.5 1.6 L15.0 0.4 L16.5 1.6 L18.0 0.4 L19.5 1.6 L21.0 0.4 L22.5 1.6 L24.0 0.4 L25.5 1.6 L27.0 0.4 L28.5 1.6 L30.0 0.4 L31.5 1.6 L33.0 0.4 L34.5 1.6 L36.0 0.4 L37.5 1.6 L39.0 0.4" fill="none" stroke="#e05050" stroke-width=".7"/></svg>
<svg class="a" style="left:471.2px;top:438.5px;" width="53.80000000000001" height="2"><path d="M0 1.6 L1.5 1.6 L3.0 0.4 L4.5 1.6 L6.0 0.4 L7.5 1.6 L9.0 0.4 L10.5 1.6 L12.0 0.4 L13.5 1.6 L15.0 0.4 L16.5 1.6 L18.0 0.4 L19.5 1.6 L21.0 0.4 L22.5 1.6 L24.0 0.4 L25.5 1.6 L27.0 0.4 L28.5 1.6 L30.0 0.4 L31.5 1.6 L33.0 0.4 L34.5 1.6 L36.0 0.4 L37.5 1.6 L39.0 0.4 L40.5 1.6 L42.0 0.4 L43.5 1.6 L45.0 0.4 L46.5 1.6 L48.0 0.4 L49.5 1.6 L51.0 0.4 L52.5 1.6" fill="none" stroke="#e05050" stroke-width=".7"/></svg>
<svg class="a" style="left:458.4px;top:523.5px;" width="35.60000000000002" height="2"><path d="M0 1.6 L1.5 1.6 L3.0 0.4 L4.5 1.6 L6.0 0.4 L7.5 1.6 L9.0 0.4 L10.5 1.6 L12.0 0.4 L13.5 1.6 L15.0 0.4 L16.5 1.6 L18.0 0.4 L19.5 1.6 L21.0 0.4 L22.5 1.6 L24.0 0.4 L25.5 1.6 L27.0 0.4 L28.5 1.6 L30.0 0.4 L31.5 1.6 L33.0 0.4 L34.5 1.6" fill="none" stroke="#e05050" stroke-width=".7"/></svg>
<div class="a" style="left:23.4px;top:250.2px;width:112.3px;height:64.5px;background:#fff;border:2px solid #c46a54;"></div>
<svg class="a" style="left:25.4px;top:252.2px;overflow:hidden;" width="108.3" height="17.5" viewBox="0 0 584 96"><defs>
      <linearGradient id="tsky" x1="0" y1="0" x2="0" y2="1"><stop offset="0" stop-color="#aecfef"/><stop offset=".55" stop-color="#bcd8f1"/><stop offset="1" stop-color="#dce9f3"/></linearGradient>
      <linearGradient id="tmt" x1="0" y1="0" x2="0" y2="1"><stop offset="0" stop-color="#9aa2bc"/><stop offset=".35" stop-color="#8890ac"/><stop offset=".7" stop-color="#75809e"/><stop offset="1" stop-color="#5e6888"/></linearGradient>
      <linearGradient id="tmt2" x1="0" y1="0" x2="0" y2="1"><stop offset="0" stop-color="#dfe6ee"/><stop offset=".45" stop-color="#aebcd2"/><stop offset="1" stop-color="#7f90b0"/></linearGradient>
      <filter id="tbl" x="-30%" y="-60%" width="160%" height="220%"><feGaussianBlur stdDeviation="2.5"/></filter>
      <filter id="tbl2" x="-20%" y="-50%" width="140%" height="200%"><feGaussianBlur stdDeviation=".9"/></filter>
      <filter id="tdark" x="0" y="0" width="100%" height="100%"><feTurbulence type="fractalNoise" baseFrequency="0.08 0.04" numOctaves="3" seed="5" result="n"/><feColorMatrix in="n" type="matrix" values="0 0 0 0 0.2  0 0 0 0 0.22  0 0 0 0 0.3  0 0 0 1.6 -0.55" result="w"/><feComposite in="w" in2="SourceGraphic" operator="in"/></filter>
      <filter id="trock" x="0" y="0" width="100%" height="100%">
        <feTurbulence type="fractalNoise" baseFrequency="0.05 0.18" numOctaves="4" seed="11" result="n"/>
        <feColorMatrix in="n" type="matrix" values="0 0 0 0 0.82  0 0 0 0 0.85  0 0 0 0 0.93  0 0 0 -1.1 0.5" result="w"/>
        <feComposite in="w" in2="SourceGraphic" operator="in"/>
      </filter>
    </defs>
    <rect x="0" y="0" width="584" height="96" fill="url(#tsky)"/>
    <g filter="url(#tbl)" fill="#fff">
      <path d="M141 30C150 18 165 8 190 4C215 1 240 2 255 8C270 14 280 24 278 40L262 58L200 40Z"/>
      <ellipse cx="350" cy="72" rx="45" ry="12"/>
      <ellipse cx="425" cy="58" rx="45" ry="14"/>
      <ellipse cx="480" cy="66" rx="40" ry="11"/>
      <ellipse cx="540" cy="76" rx="45" ry="11"/>
      <ellipse cx="410" cy="82" rx="90" ry="8"/>
      <ellipse cx="565" cy="86" rx="25" ry="7"/>
    </g>
    <path d="M0 0.4L57.6 0.4L77 6.2L103 14L122.7 19.2L135.7 24.4L149 28.4L160 26L173.6 24.4L199.6 31L221.7 40.1L238.7 45.3L258.2 53.1L270 60L300 66L324 72.9L360 84L400 96H0Z" fill="url(#tmt)"/>
    <path d="M0 0.4L57.6 0.4L77 6.2L103 14L122.7 19.2L135.7 24.4L149 28.4L160 26L173.6 24.4L199.6 31L221.7 40.1L238.7 45.3L258.2 53.1L270 60L300 66L324 72.9L360 84L400 96H0Z" fill="#fff" opacity="0"/>
    <path d="M0 0.4L57.6 0.4L77 6.2L103 14L122.7 19.2L135.7 24.4L149 28.4L160 26L173.6 24.4L199.6 31L221.7 40.1L238.7 45.3L258.2 53.1L270 60L300 66L324 72.9L360 84L400 96H0Z" fill="#000" filter="url(#tdark)" opacity="0"/>
    <path d="M0 55.7L38 66L77 81.7L120 86L141 80.7L200 88L245 96H0Z" fill="#4a5778"/>
    <g filter="url(#tbl2)" fill="none" stroke="#e8ecf2" opacity=".75">
      <path d="M22 1.5L57 2L78 7.5L102 15.5L123 21" stroke-width="1.6"/>
      <path d="M36.5 70C45 76 60 86 73 96" stroke-width="1"/>
      <path d="M99 52L117 62.5" stroke-width="1"/>
      <path d="M154 75.5C165 76 180 79 196 80.7" stroke-width="1.4"/>
      <path d="M193 68C203 73 215 79 226 84.6" stroke-width="1.2"/>
      <path d="M214 70.7C226 75 238 79 250 83.3" stroke-width="1"/>
      <path d="M4 15L10 20" stroke-width="1"/>
      <path d="M170 48L176 52" stroke-width="1.2"/>
    </g>
    <path d="M343 96L360 86L380 79L400 72L421.6 65.8L440 72L470 80L500 83L520 85L550 86L568 90L584 96Z" fill="url(#tmt2)"/>
    <g fill="#f5f7fa" opacity=".95" filter="url(#tbl2)">
      <path d="M392 74L421.6 65.8L444 73L462 79L445 80L430 76L418 82L405 78Z"/>
      <path d="M368 82L380 79L392 80L378 85Z"/>
      <path d="M480 82L500 84L492 86Z"/>
    </g>
    <path d="M300 66L324 72.9L360 84L400 96H290Z" fill="#55607e"/>
    <g>
      <rect x="258" y="65" width="50" height="16" fill="#a3a191"/>
      <path d="M256.9 66.5Q270 52 278.5 36L280.3 33.6L282 36Q292 52 309 66.5Z" fill="#809a74"/>
      <path d="M256.9 66.5Q270 52 278.5 36L280.3 33.6L276 66.5Z" fill="#71896a"/>
      <rect x="279.9" y="22" width=".9" height="12" fill="#444"/>
      <path d="M256 66.2H309" stroke="#444a40" stroke-width="1"/>
      <rect x="263.7" y="67.4" width="7.5" height="8.6" fill="#2e2e2c"/>
      <rect x="287" y="67.4" width="8.8" height="8.6" fill="#2e2e2c"/>
      <path d="M251 96V88L262 81H304L322 88V96Z" fill="#8a9a7a"/>
      <path d="M266 90L276 82L288 90Z" fill="#92a284"/>
      <rect x="271" y="91" width="10" height="5" fill="#2e2e2c"/>
      <rect x="300" y="92" width="6" height="4" fill="#2e2e2c"/>
    </g></svg>
<div class="t" style="left:51.30px;top:277.49px;font-size:5.8px;color:#222;font-family:'Liberation Serif',serif;letter-spacing:-0.088px;">About our idea of old age</div>
<div class="t" style="left:65.00px;top:286.34px;font-size:3.2px;color:#333;font-family:'Liberation Serif',serif;letter-spacing:-0.118px;">Mus, 27th Octobre 2022</div>
<div class="t" style="left:60.60px;top:293.84px;font-size:3.2px;color:#333;font-family:'Liberation Serif',serif;letter-spacing:-0.098px;">Univ.-Prof. Dr. Bernd Seeberger</div>
<div class="t" style="left:66.00px;top:297.54px;font-size:3.2px;color:#333;font-family:'Liberation Serif',serif;letter-spacing:-0.133px;">University UMIT-Tirol</div>
<div class="t" style="left:66.00px;top:301.44px;font-size:3.2px;color:#333;font-family:'Liberation Serif',serif;letter-spacing:0.008px;">Hall in Tyrol/Austria</div>
<svg class="a" style="left:799.5px;top:390.5px;" width="8" height="11"><path d="M0.5 0.5V9L2.8 7L4.5 10.3L5.8 9.7L4.2 6.5H7.2Z" fill="#111" stroke="#eee" stroke-width=".6"/></svg>
<div class="a" style="left:826.8px;top:362px;width:1.3px;height:26px;background:#cfcfcf;"></div>
<div class="a" style="left:830px;top:362px;width:1.3px;height:26px;background:#cfcfcf;"></div>
<svg class="a" style="left:835px;top:318px;overflow:hidden;" width="205" height="115">
    <defs>
      <radialGradient id="lamp" cx="62" cy="59" r="22" gradientUnits="userSpaceOnUse"><stop offset="0" stop-color="#ffffff"/><stop offset=".35" stop-color="#f2f6f4"/><stop offset="1" stop-color="#9aa090" stop-opacity="0"/></radialGradient>
      <linearGradient id="ceil" x1="0" y1="0" x2="1" y2="0"><stop offset="0" stop-color="#8a8e7e"/><stop offset=".6" stop-color="#959a8a"/><stop offset="1" stop-color="#a4a99a"/></linearGradient>
      <radialGradient id="face" cx="100" cy="55" r="55" gradientUnits="userSpaceOnUse"><stop offset="0" stop-color="#8e7260"/><stop offset=".5" stop-color="#7c5e4e"/><stop offset="1" stop-color="#5e463a"/></radialGradient>
      <filter id="vb"><feGaussianBlur stdDeviation="1"/></filter>
      <filter id="vb3"><feGaussianBlur stdDeviation=".7"/></filter>
    </defs>
    <g filter="url(#vb3)">
    <rect width="205" height="115" fill="url(#ceil)"/>
    <rect x="0" y="0" width="140" height="20" fill="#9a9e90" opacity=".4"/>
    <rect x="0" y="61" width="135" height="9.5" fill="#7c7a6a"/>
    <circle cx="62" cy="59" r="22" fill="url(#lamp)"/>
    <rect x="0" y="70.5" width="72" height="13.5" fill="#4e1618"/>
    <rect x="0" y="72" width="6" height="12" fill="#2a1212"/>
    <rect x="12" y="77" width="22" height="6" fill="#7a7a62"/>
    <rect x="0" y="83" width="72" height="5.5" fill="#8e7a48"/>
    <rect x="0" y="88.5" width="72" height="26.5" fill="#2a1c1a"/>
    <rect x="132" y="0" width="73" height="115" fill="#8e998c"/>
    <rect x="132" y="0" width="20" height="115" fill="#9eac9f"/>
    <rect x="152" y="0" width="33" height="30" fill="#7e8678"/>
    <path d="M136 52L150 46V92L136 96Z" fill="#8a9488"/>
    <rect x="140" y="60" width="10" height="28" fill="#3a3440"/>
    <rect x="142" y="64" width="6" height="18" fill="#8a3040"/>
    <circle cx="172.6" cy="39.8" r="4.8" fill="#9aa6b8" stroke="#3e4e6e" stroke-width=".9"/>
    <rect x="171" y="51.5" width="8" height="8" fill="#5e4e36"/>
    <rect x="172.5" y="53" width="5" height="5" fill="#8e7e50"/>
    <rect x="171" y="67.5" width="14" height="16.5" fill="#a4a89c" stroke="#7a7e70" stroke-width="1"/>
    <rect x="173.5" y="70.5" width="9" height="10" fill="#2e4050"/>
    <rect x="184.6" y="0" width="20.4" height="115" fill="#b4c2c8"/>
    <path d="M186 0H205V36L186 45Z" fill="#3a4a5e"/>
    <rect x="171" y="96" width="14" height="19" fill="#141a24"/>
    </g>
    <g filter="url(#vb)">
      <path d="M20 115C26 100 40 90 62 88L90 86H132C156 88 178 98 186 115Z" fill="#646c62"/>
      <path d="M44 100C48 94 54 90 60 89" fill="none" stroke="#8a948a" stroke-width="2"/>
      <path d="M136 90C154 94 172 104 178 112" fill="none" stroke="#7c867c" stroke-width="2"/>
      <path d="M70 50C70 36 82 27 104 27C124 27 136 38 136 52L136.5 66C135 74 133 80 130 86L128 98C122 110 112 115 100 115C86 115 77 106 73 94L70 82C68 72 69 62 70 50Z" fill="url(#face)"/>
      <path d="M76 36C84 31 96 30 108 31C120 32 128 38 132 44C126 40 118 38 106 38C94 38 84 40 76 44Z" fill="#9a7e6c" opacity=".7"/>
      <path d="M68 56C67 38 80 25 104 25C126 25 139 37 138 54L137 66C134 54 131 46 126 42C120 37 110 36 100 36C90 36 80 40 75 46C72 50 71 56 71 66Z" fill="#6e6d68"/>
      <path d="M134 24C141 23 146 30 144 40C143 44 140 46 138 47C137 38 136 30 134 24Z" fill="#141210"/>
      <path d="M135 66C140 64 143 70 141 78C140 82 137 84 133 84Z" fill="#6a4e40"/>
    </g>
    <g fill="none" stroke="#1e1614" stroke-width="1.6">
      <ellipse cx="81.4" cy="75.8" rx="12.3" ry="8.5"/>
      <ellipse cx="116.7" cy="76.8" rx="14.2" ry="8.5"/>
      <path d="M93.7 75.5C96 73.5 100 73.5 102.5 76M69 74L64 71M131 76L137 72"/>
    </g>
    <path d="M72 66C78 62 86 62 92 66M104 68C110 63 120 63 128 67" fill="none" stroke="#2e221e" stroke-width="2" opacity=".7"/>
    <path d="M98 82L94 94C96 98 102 98 106 96" fill="none" stroke="#4e3a30" stroke-width="1.6" opacity=".55"/>
    <path d="M90 104C96 106 104 106 110 104" fill="none" stroke="#3e2a24" stroke-width="1.6" opacity=".55"/>
    </svg>
<div class="a" style="left:843.3px;top:325.2px;width:132.7px;height:26.1px;background:rgba(70,72,68,.6);border-radius:8px;"></div>
<svg class="a" style="left:854.5px;top:330.8px;" width="9" height="15"><path d="M1.5 0.5H7.5L6.5 2V5.5L8.5 8.5H0.5L2.5 5.5V2Z" fill="#fff"/><rect x="4" y="8.5" width="1.2" height="6" fill="#fff"/></svg>
<div class="t" style="left:872.20px;top:332.09px;font-size:12.6px;color:#fff;letter-spacing:-0.439px;">Sabitlemeyi Kaldır</div>
<div class="a" style="left:835px;top:414px;width:40.5px;height:19px;background:rgba(40,40,40,.6);"></div>
<svg class="a" style="left:837.5px;top:418px;" width="15" height="12"><rect x="0" y="8" width="2.4" height="4" fill="#fff"/><rect x="4" y="5.5" width="2.4" height="6.5" fill="#fff"/><rect x="8" y="3" width="2.4" height="9" fill="#fff"/><rect x="12" y="0" width="2.4" height="12" fill="#fff"/></svg>
<div class="t" style="left:857.20px;top:418.60px;font-size:12px;color:#fff;letter-spacing:-1.480px;">PC</div>
</body></html>
